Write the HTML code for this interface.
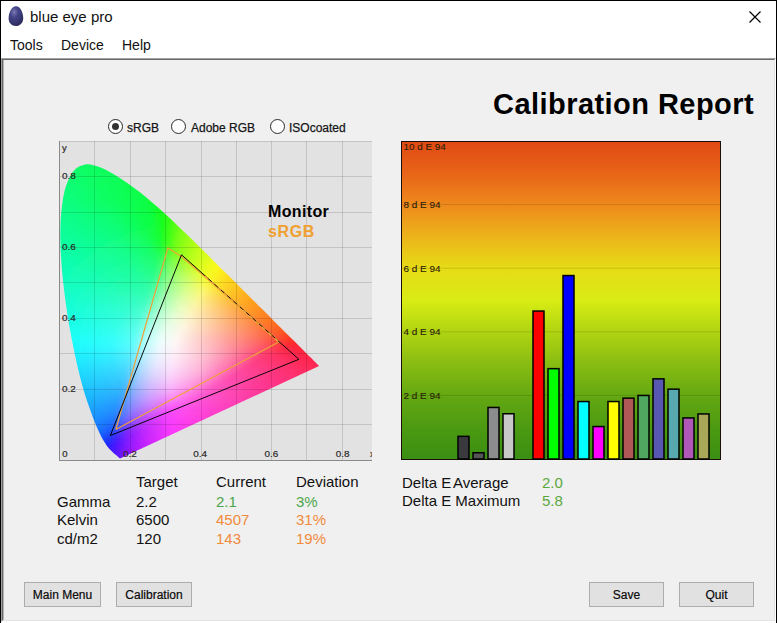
<!DOCTYPE html>
<html><head><meta charset="utf-8">
<style>
*{margin:0;padding:0;box-sizing:border-box}
html,body{width:777px;height:623px;overflow:hidden;background:#fff;font-family:"Liberation Sans",sans-serif;color:#111}
.a{position:absolute;white-space:nowrap}
#frame{position:absolute;left:0;top:0;width:777px;height:623px;border-left:1px solid #000;border-top:1px solid #000;border-right:1px solid #000}
#client{position:absolute;left:1px;top:58px;width:775px;height:564px;background:#f0f0f0;border-top:1px solid #a0a0a0;border-left:1px solid #a0a0a0;border-right:1px solid #fff;border-bottom:1px solid #fff}
#client2{position:absolute;left:2px;top:59px;width:773px;height:562px;border-top:1px solid #696969;border-left:1px solid #696969;border-right:1px solid #e3e3e3;border-bottom:1px solid #e3e3e3}
.btn{position:absolute;height:25px;background:#e1e1e1;border:1px solid #adadad;font-size:12px;-webkit-text-stroke:0.2px #222;text-align:center;line-height:24px;color:#000}
.radio{position:absolute;width:15px;height:15px;border-radius:50%;border:1.3px solid #2a2a2a;background:#fff}
</style></head><body>
<div id="frame"></div>
<!-- title -->
<svg class="a" style="left:0;top:0" width="32" height="32" viewBox="0 0 32 32"><defs><radialGradient id="egg" cx="0.38" cy="0.3" r="0.75"><stop offset="0" stop-color="#7a7ab0"/><stop offset="0.35" stop-color="#45458a"/><stop offset="0.8" stop-color="#33336a"/><stop offset="1" stop-color="#2a2a55"/></radialGradient></defs><path d="M16,6.2C20.3,6.2 23.2,12.5 23.2,18.2C23.2,22.8 20,26 15.8,26C11.6,26 8.6,22.8 8.6,18.5C8.6,12.5 11.7,6.2 16,6.2Z" fill="url(#egg)"/></svg>
<div class="a" style="left:30px;top:8px;font-size:15px;line-height:18px">blue eye pro</div>
<svg class="a" style="left:748px;top:10px" width="14" height="14" viewBox="0 0 14 14"><path d="M1.5 1.5L12.5 12.5M12.5 1.5L1.5 12.5" stroke="#000" stroke-width="1.2" fill="none"/></svg>
<!-- menu -->
<div class="a" style="left:10px;top:37px;font-size:14px;line-height:17px">Tools</div>
<div class="a" style="left:61px;top:37px;font-size:14px;line-height:17px">Device</div>
<div class="a" style="left:122px;top:37px;font-size:14px;line-height:17px">Help</div>
<div id="client"></div><div id="client2"></div><div class="a" style="left:3px;top:60px;width:1px;height:560px;background:#b4b4b4"></div>

<div class="a" style="left:493px;top:88px;font-size:29px;font-weight:bold;color:#000;line-height:32px;letter-spacing:0.45px">Calibration Report</div>

<!-- radios -->
<div class="radio" style="left:108px;top:119px"></div>
<div class="a" style="left:112px;top:123px;width:7px;height:7px;border-radius:50%;background:#333"></div>
<div class="a" style="left:127px;top:121px;font-size:12px;line-height:14px;-webkit-text-stroke:0.25px #222">sRGB</div>
<div class="radio" style="left:170.5px;top:119px"></div>
<div class="a" style="left:191px;top:121px;font-size:12px;line-height:14px;-webkit-text-stroke:0.25px #222">Adobe RGB</div>
<div class="radio" style="left:269.5px;top:119px"></div>
<div class="a" style="left:289px;top:121px;font-size:12px;line-height:14px;-webkit-text-stroke:0.25px #222">ISOcoated</div>

<!-- CIE -->
<svg class="a" style="left:0;top:0" width="777" height="623" viewBox="0 0 777 623">
<clipPath id="plotclip"><rect x="59" y="141" width="313" height="320"/></clipPath><rect x="59" y="141" width="313" height="319" fill="#e2e2e2"/>
<defs><clipPath id="loc"><path d="M120.6 458.2C120.6 458.2 120.6 458.2 120.6 458.2C120.6 458.2 120.5 458.3 120.5 458.3C120.5 458.3 120.5 458.3 120.5 458.3C120.4 458.3 120.4 458.3 120.3 458.3C120.3 458.3 120.3 458.3 120.2 458.3C120.2 458.3 120.2 458.3 120.1 458.3C120.0 458.3 120.0 458.3 119.9 458.3C119.9 458.3 119.8 458.3 119.7 458.2C119.6 458.1 119.4 458.1 119.3 457.9C119.1 457.8 119.0 457.7 118.8 457.6C118.6 457.4 118.3 457.2 118.1 457.0C117.8 456.7 117.5 456.4 117.2 456.1C116.9 455.8 116.5 455.5 116.0 455.1C115.6 454.7 115.0 454.3 114.4 453.7C113.8 453.2 113.2 452.7 112.5 452.0C111.7 451.2 110.9 450.5 110.0 449.5C109.1 448.5 108.1 447.5 107.0 445.9C105.8 444.2 104.5 442.3 102.9 439.5C101.4 436.7 99.7 433.7 97.8 429.2C95.9 424.8 93.7 419.7 91.3 413.0C88.9 406.2 86.0 398.4 83.3 388.9C80.6 379.3 77.7 367.9 75.1 355.4C72.4 342.9 69.5 328.1 67.3 313.7C65.1 299.3 63.1 283.4 61.9 269.1C60.7 254.8 60.0 240.4 60.4 227.9C60.7 215.4 61.9 203.3 63.9 194.1C66.0 184.8 69.2 177.1 72.8 172.1C76.3 167.2 80.9 165.3 85.3 164.4C89.7 163.6 94.7 165.5 99.4 167.1C104.2 168.8 109.1 171.7 113.8 174.3C118.4 176.9 122.9 179.9 127.3 182.9C131.7 186.0 136.0 189.2 140.3 192.6C144.6 196.0 148.8 199.6 153.1 203.2C157.3 206.9 161.5 210.7 165.8 214.6C170.0 218.4 174.2 222.4 178.4 226.4C182.6 230.4 186.9 234.5 191.1 238.6C195.3 242.7 199.5 246.9 203.7 251.0C207.9 255.1 212.1 259.3 216.2 263.4C220.3 267.5 224.5 271.6 228.5 275.6C232.5 279.6 236.5 283.6 240.4 287.5C244.3 291.4 248.2 295.2 251.9 298.9C255.6 302.6 259.2 306.2 262.6 309.6C266.0 313.0 269.4 316.4 272.4 319.4C275.5 322.5 278.3 325.3 281.0 327.9C283.6 330.6 286.2 333.2 288.5 335.4C290.8 337.7 292.8 339.7 294.7 341.6C296.6 343.5 298.2 345.1 299.8 346.7C301.3 348.2 302.6 349.5 303.8 350.7C305.0 351.9 306.0 352.9 307.0 353.9C308.0 354.9 308.8 355.7 309.6 356.5C310.4 357.3 311.1 358.0 311.8 358.6C312.4 359.3 313.0 359.9 313.5 360.4C314.1 360.9 314.5 361.4 314.9 361.8C315.4 362.2 315.6 362.5 316.0 362.9C316.4 363.3 317.0 363.8 317.4 364.3C317.9 364.7 318.3 365.2 318.6 365.5C318.9 365.8 319.0 365.9 319.1 366.0Z"/></clipPath><linearGradient id="r0" gradientUnits="userSpaceOnUse" x1="78" x2="95" y1="0" y2="0"><stop offset="0.000" stop-color="#08fe67"/><stop offset="0.941" stop-color="#08fe61"/><stop offset="1.000" stop-color="#08fe60"/></linearGradient><linearGradient id="r1" gradientUnits="userSpaceOnUse" x1="75" x2="104" y1="0" y2="0"><stop offset="0.000" stop-color="#08fe68"/><stop offset="0.966" stop-color="#08fe5d"/><stop offset="1.000" stop-color="#08fe5c"/></linearGradient><linearGradient id="r2" gradientUnits="userSpaceOnUse" x1="72" x2="108" y1="0" y2="0"><stop offset="0.000" stop-color="#08fe68"/><stop offset="1.000" stop-color="#08fe5b"/></linearGradient><linearGradient id="r3" gradientUnits="userSpaceOnUse" x1="69" x2="112" y1="0" y2="0"><stop offset="0.000" stop-color="#08fe6a"/><stop offset="0.977" stop-color="#08fe59"/><stop offset="1.000" stop-color="#08fe59"/></linearGradient><linearGradient id="r4" gradientUnits="userSpaceOnUse" x1="67" x2="116" y1="0" y2="0"><stop offset="0.000" stop-color="#08fe6b"/><stop offset="0.980" stop-color="#08fe58"/><stop offset="1.000" stop-color="#08fe58"/></linearGradient><linearGradient id="r5" gradientUnits="userSpaceOnUse" x1="66" x2="120" y1="0" y2="0"><stop offset="0.000" stop-color="#08fe6c"/><stop offset="1.000" stop-color="#09fe55"/></linearGradient><linearGradient id="r6" gradientUnits="userSpaceOnUse" x1="65" x2="123" y1="0" y2="0"><stop offset="0.000" stop-color="#08fe6e"/><stop offset="1.000" stop-color="#09fe54"/></linearGradient><linearGradient id="r7" gradientUnits="userSpaceOnUse" x1="64" x2="127" y1="0" y2="0"><stop offset="0.000" stop-color="#08fe70"/><stop offset="0.984" stop-color="#09fe52"/><stop offset="1.000" stop-color="#09fe51"/></linearGradient><linearGradient id="r8" gradientUnits="userSpaceOnUse" x1="63" x2="130" y1="0" y2="0"><stop offset="0.000" stop-color="#08fe72"/><stop offset="0.985" stop-color="#09fe50"/><stop offset="1.000" stop-color="#09fe4f"/></linearGradient><linearGradient id="r9" gradientUnits="userSpaceOnUse" x1="63" x2="133" y1="0" y2="0"><stop offset="0.000" stop-color="#08fe74"/><stop offset="1.000" stop-color="#09fe4e"/></linearGradient><linearGradient id="r10" gradientUnits="userSpaceOnUse" x1="62" x2="136" y1="0" y2="0"><stop offset="0.000" stop-color="#08fe76"/><stop offset="1.000" stop-color="#0afe4c"/></linearGradient><linearGradient id="r11" gradientUnits="userSpaceOnUse" x1="61" x2="138" y1="0" y2="0"><stop offset="0.000" stop-color="#08fe78"/><stop offset="0.987" stop-color="#0afe4b"/><stop offset="1.000" stop-color="#0afe4a"/></linearGradient><linearGradient id="r12" gradientUnits="userSpaceOnUse" x1="60" x2="141" y1="0" y2="0"><stop offset="0.000" stop-color="#08fe7a"/><stop offset="0.988" stop-color="#0afe48"/><stop offset="1.000" stop-color="#0afe48"/></linearGradient><linearGradient id="r13" gradientUnits="userSpaceOnUse" x1="59" x2="144" y1="0" y2="0"><stop offset="0.000" stop-color="#08fe7b"/><stop offset="0.988" stop-color="#0afe46"/><stop offset="1.000" stop-color="#0afe45"/></linearGradient><linearGradient id="r14" gradientUnits="userSpaceOnUse" x1="58" x2="146" y1="0" y2="0"><stop offset="0.000" stop-color="#08fe7d"/><stop offset="0.932" stop-color="#0afe49"/><stop offset="1.000" stop-color="#0afe43"/></linearGradient><linearGradient id="r15" gradientUnits="userSpaceOnUse" x1="58" x2="149" y1="0" y2="0"><stop offset="0.000" stop-color="#08fe7f"/><stop offset="0.923" stop-color="#0bfe47"/><stop offset="0.989" stop-color="#0bfe41"/><stop offset="1.000" stop-color="#0bfe40"/></linearGradient><linearGradient id="r16" gradientUnits="userSpaceOnUse" x1="58" x2="151" y1="0" y2="0"><stop offset="0.000" stop-color="#08fe80"/><stop offset="0.882" stop-color="#0bfe4a"/><stop offset="0.989" stop-color="#0bfe3e"/><stop offset="1.000" stop-color="#0bfe3d"/></linearGradient><linearGradient id="r17" gradientUnits="userSpaceOnUse" x1="58" x2="153" y1="0" y2="0"><stop offset="0.000" stop-color="#08fe81"/><stop offset="0.884" stop-color="#0bfe48"/><stop offset="0.989" stop-color="#0bfe3b"/><stop offset="1.000" stop-color="#0bfe3a"/></linearGradient><linearGradient id="r18" gradientUnits="userSpaceOnUse" x1="57" x2="156" y1="0" y2="0"><stop offset="0.000" stop-color="#08fe83"/><stop offset="0.869" stop-color="#0bfe47"/><stop offset="0.990" stop-color="#0cfe36"/><stop offset="1.000" stop-color="#0cfe34"/></linearGradient><linearGradient id="r19" gradientUnits="userSpaceOnUse" x1="57" x2="158" y1="0" y2="0"><stop offset="0.000" stop-color="#08fe84"/><stop offset="0.851" stop-color="#0cfe48"/><stop offset="0.990" stop-color="#0cfe31"/><stop offset="1.000" stop-color="#0cfe2f"/></linearGradient><linearGradient id="r20" gradientUnits="userSpaceOnUse" x1="57" x2="160" y1="0" y2="0"><stop offset="0.000" stop-color="#09fe85"/><stop offset="0.835" stop-color="#0cfe49"/><stop offset="0.990" stop-color="#0cfe2b"/><stop offset="1.000" stop-color="#0cfe28"/></linearGradient><linearGradient id="r21" gradientUnits="userSpaceOnUse" x1="57" x2="162" y1="0" y2="0"><stop offset="0.000" stop-color="#09fe87"/><stop offset="0.819" stop-color="#0cfe49"/><stop offset="0.990" stop-color="#0dfe24"/><stop offset="1.000" stop-color="#0efe21"/></linearGradient><linearGradient id="r22" gradientUnits="userSpaceOnUse" x1="57" x2="165" y1="0" y2="0"><stop offset="0.000" stop-color="#09fe88"/><stop offset="0.759" stop-color="#0cfe4f"/><stop offset="0.926" stop-color="#0dfe2e"/><stop offset="1.000" stop-color="#15fe17"/></linearGradient><linearGradient id="r23" gradientUnits="userSpaceOnUse" x1="56" x2="167" y1="0" y2="0"><stop offset="0.000" stop-color="#09fe8a"/><stop offset="0.559" stop-color="#0cfe60"/><stop offset="0.829" stop-color="#0dfe43"/><stop offset="0.973" stop-color="#14fe19"/><stop offset="0.991" stop-color="#1afe13"/><stop offset="1.000" stop-color="#1cfe12"/></linearGradient><linearGradient id="r24" gradientUnits="userSpaceOnUse" x1="56" x2="169" y1="0" y2="0"><stop offset="0.000" stop-color="#09fe8b"/><stop offset="0.513" stop-color="#0cfe65"/><stop offset="0.814" stop-color="#0dfe44"/><stop offset="0.938" stop-color="#12fe1e"/><stop offset="0.991" stop-color="#23fe10"/><stop offset="1.000" stop-color="#26fe0f"/></linearGradient><linearGradient id="r25" gradientUnits="userSpaceOnUse" x1="56" x2="171" y1="0" y2="0"><stop offset="0.000" stop-color="#09fe8c"/><stop offset="0.470" stop-color="#0cfe6a"/><stop offset="0.817" stop-color="#0efe41"/><stop offset="0.922" stop-color="#14fe1d"/><stop offset="0.991" stop-color="#2cfe0f"/><stop offset="1.000" stop-color="#2ffe0e"/></linearGradient><linearGradient id="r26" gradientUnits="userSpaceOnUse" x1="56" x2="173" y1="0" y2="0"><stop offset="0.000" stop-color="#09fe8e"/><stop offset="0.479" stop-color="#0cfe6a"/><stop offset="0.803" stop-color="#0efe41"/><stop offset="0.906" stop-color="#15fe1d"/><stop offset="0.991" stop-color="#35fe0e"/><stop offset="1.000" stop-color="#39fe0e"/></linearGradient><linearGradient id="r27" gradientUnits="userSpaceOnUse" x1="56" x2="175" y1="0" y2="0"><stop offset="0.000" stop-color="#09fe8f"/><stop offset="0.471" stop-color="#0cfe6d"/><stop offset="0.790" stop-color="#0efe42"/><stop offset="0.891" stop-color="#16fe1e"/><stop offset="0.975" stop-color="#39fe0f"/><stop offset="0.992" stop-color="#40fe0f"/><stop offset="1.000" stop-color="#43fe0f"/></linearGradient><linearGradient id="r28" gradientUnits="userSpaceOnUse" x1="56" x2="178" y1="0" y2="0"><stop offset="0.000" stop-color="#09fe91"/><stop offset="0.459" stop-color="#0dfe6f"/><stop offset="0.787" stop-color="#0ffe3f"/><stop offset="0.869" stop-color="#17fe1e"/><stop offset="0.951" stop-color="#3cfe0f"/><stop offset="1.000" stop-color="#54fe0f"/></linearGradient><linearGradient id="r29" gradientUnits="userSpaceOnUse" x1="55" x2="180" y1="0" y2="0"><stop offset="0.000" stop-color="#09fe92"/><stop offset="0.464" stop-color="#0dfe70"/><stop offset="0.768" stop-color="#0ffe42"/><stop offset="0.864" stop-color="#1afe1c"/><stop offset="0.944" stop-color="#43fe10"/><stop offset="0.992" stop-color="#5cfe10"/><stop offset="1.000" stop-color="#60fe10"/></linearGradient><linearGradient id="r30" gradientUnits="userSpaceOnUse" x1="55" x2="182" y1="0" y2="0"><stop offset="0.000" stop-color="#09fe94"/><stop offset="0.457" stop-color="#0dfe72"/><stop offset="0.772" stop-color="#10fe3f"/><stop offset="0.850" stop-color="#1afe1d"/><stop offset="0.929" stop-color="#46fe10"/><stop offset="0.992" stop-color="#68fe10"/><stop offset="1.000" stop-color="#6cfe10"/></linearGradient><linearGradient id="r31" gradientUnits="userSpaceOnUse" x1="55" x2="184" y1="0" y2="0"><stop offset="0.000" stop-color="#0afe95"/><stop offset="0.465" stop-color="#0efe72"/><stop offset="0.760" stop-color="#10fe3f"/><stop offset="0.837" stop-color="#1bfe1e"/><stop offset="0.915" stop-color="#49fe11"/><stop offset="0.992" stop-color="#73fe11"/><stop offset="1.000" stop-color="#76fe10"/></linearGradient><linearGradient id="r32" gradientUnits="userSpaceOnUse" x1="55" x2="186" y1="0" y2="0"><stop offset="0.000" stop-color="#0afe96"/><stop offset="0.458" stop-color="#0efe75"/><stop offset="0.748" stop-color="#11fe40"/><stop offset="0.824" stop-color="#1bfe1f"/><stop offset="0.901" stop-color="#4bfe11"/><stop offset="0.992" stop-color="#7dfe11"/><stop offset="1.000" stop-color="#80fe11"/></linearGradient><linearGradient id="r33" gradientUnits="userSpaceOnUse" x1="55" x2="188" y1="0" y2="0"><stop offset="0.000" stop-color="#0afe98"/><stop offset="0.466" stop-color="#0ffe75"/><stop offset="0.737" stop-color="#11fe42"/><stop offset="0.812" stop-color="#1cfe1f"/><stop offset="0.887" stop-color="#4efe12"/><stop offset="0.977" stop-color="#80fe11"/><stop offset="0.992" stop-color="#87fe11"/><stop offset="1.000" stop-color="#89fe11"/></linearGradient><linearGradient id="r34" gradientUnits="userSpaceOnUse" x1="55" x2="191" y1="0" y2="0"><stop offset="0.000" stop-color="#0afe99"/><stop offset="0.456" stop-color="#0ffe77"/><stop offset="0.721" stop-color="#12fe43"/><stop offset="0.794" stop-color="#1cfe21"/><stop offset="0.868" stop-color="#50fe12"/><stop offset="0.956" stop-color="#84fe12"/><stop offset="1.000" stop-color="#94fe12"/></linearGradient><linearGradient id="r35" gradientUnits="userSpaceOnUse" x1="55" x2="193" y1="0" y2="0"><stop offset="0.000" stop-color="#0afe9b"/><stop offset="0.449" stop-color="#10fe79"/><stop offset="0.696" stop-color="#12fe48"/><stop offset="0.783" stop-color="#1dfe21"/><stop offset="0.855" stop-color="#52fe13"/><stop offset="0.942" stop-color="#87fe13"/><stop offset="1.000" stop-color="#9cfe12"/></linearGradient><linearGradient id="r36" gradientUnits="userSpaceOnUse" x1="55" x2="195" y1="0" y2="0"><stop offset="0.000" stop-color="#0afe9c"/><stop offset="0.443" stop-color="#10fe7b"/><stop offset="0.671" stop-color="#13fe4e"/><stop offset="0.757" stop-color="#18fe2a"/><stop offset="0.814" stop-color="#3bfe15"/><stop offset="0.900" stop-color="#7cfe13"/><stop offset="1.000" stop-color="#a3fe13"/></linearGradient><linearGradient id="r37" gradientUnits="userSpaceOnUse" x1="55" x2="197" y1="0" y2="0"><stop offset="0.000" stop-color="#0afe9e"/><stop offset="0.437" stop-color="#11fe7d"/><stop offset="0.648" stop-color="#13fe54"/><stop offset="0.746" stop-color="#18fe2b"/><stop offset="0.803" stop-color="#3efe16"/><stop offset="0.887" stop-color="#7efe14"/><stop offset="1.000" stop-color="#abfe13"/></linearGradient><linearGradient id="r38" gradientUnits="userSpaceOnUse" x1="55" x2="199" y1="0" y2="0"><stop offset="0.000" stop-color="#0bfe9f"/><stop offset="0.444" stop-color="#11fe7e"/><stop offset="0.639" stop-color="#14fe56"/><stop offset="0.736" stop-color="#19fe2c"/><stop offset="0.792" stop-color="#40fe16"/><stop offset="0.861" stop-color="#78fe14"/><stop offset="0.986" stop-color="#adfe14"/><stop offset="1.000" stop-color="#b2fe14"/></linearGradient><linearGradient id="r39" gradientUnits="userSpaceOnUse" x1="55" x2="201" y1="0" y2="0"><stop offset="0.000" stop-color="#0bfea0"/><stop offset="0.425" stop-color="#11fe81"/><stop offset="0.616" stop-color="#14fe5e"/><stop offset="0.712" stop-color="#17fe36"/><stop offset="0.753" stop-color="#29fe1f"/><stop offset="0.836" stop-color="#72fe15"/><stop offset="0.945" stop-color="#a7fe15"/><stop offset="1.000" stop-color="#b9fe14"/></linearGradient><linearGradient id="r40" gradientUnits="userSpaceOnUse" x1="55" x2="203" y1="0" y2="0"><stop offset="0.000" stop-color="#0bfea2"/><stop offset="0.432" stop-color="#12fe82"/><stop offset="0.622" stop-color="#15fe5c"/><stop offset="0.716" stop-color="#1bfe30"/><stop offset="0.757" stop-color="#37fe1b"/><stop offset="0.824" stop-color="#75fe16"/><stop offset="0.932" stop-color="#aafe15"/><stop offset="1.000" stop-color="#c0fe14"/></linearGradient><linearGradient id="r41" gradientUnits="userSpaceOnUse" x1="55" x2="205" y1="0" y2="0"><stop offset="0.000" stop-color="#0bfea3"/><stop offset="0.427" stop-color="#13fe84"/><stop offset="0.613" stop-color="#15fe60"/><stop offset="0.693" stop-color="#18fe3b"/><stop offset="0.733" stop-color="#2dfe23"/><stop offset="0.800" stop-color="#6efe16"/><stop offset="0.907" stop-color="#a7fe16"/><stop offset="1.000" stop-color="#c7fe15"/></linearGradient><linearGradient id="r42" gradientUnits="userSpaceOnUse" x1="55" x2="207" y1="0" y2="0"><stop offset="0.000" stop-color="#0bfea5"/><stop offset="0.447" stop-color="#14fe84"/><stop offset="0.618" stop-color="#16fe5f"/><stop offset="0.697" stop-color="#1dfe36"/><stop offset="0.737" stop-color="#3cfe1f"/><stop offset="0.803" stop-color="#7afe17"/><stop offset="0.921" stop-color="#b4fe16"/><stop offset="1.000" stop-color="#cefe15"/></linearGradient><linearGradient id="r43" gradientUnits="userSpaceOnUse" x1="55" x2="209" y1="0" y2="0"><stop offset="0.000" stop-color="#0bfea6"/><stop offset="0.429" stop-color="#14fe87"/><stop offset="0.610" stop-color="#17fe63"/><stop offset="0.688" stop-color="#1ffe3a"/><stop offset="0.740" stop-color="#4efe1e"/><stop offset="0.805" stop-color="#85fe18"/><stop offset="0.948" stop-color="#c4fe16"/><stop offset="1.000" stop-color="#d4fe16"/></linearGradient><linearGradient id="r44" gradientUnits="userSpaceOnUse" x1="55" x2="211" y1="0" y2="0"><stop offset="0.000" stop-color="#0cfea8"/><stop offset="0.436" stop-color="#15fe88"/><stop offset="0.615" stop-color="#18fe62"/><stop offset="0.679" stop-color="#21fe3f"/><stop offset="0.744" stop-color="#5ffe1e"/><stop offset="0.821" stop-color="#95fe18"/><stop offset="0.974" stop-color="#d3fe17"/><stop offset="1.000" stop-color="#dbfe16"/></linearGradient><linearGradient id="r45" gradientUnits="userSpaceOnUse" x1="55" x2="213" y1="0" y2="0"><stop offset="0.000" stop-color="#0cfea9"/><stop offset="0.418" stop-color="#15fe8c"/><stop offset="0.595" stop-color="#18fe6a"/><stop offset="0.658" stop-color="#1dfe4d"/><stop offset="0.696" stop-color="#39fe34"/><stop offset="0.759" stop-color="#79fe1c"/><stop offset="0.886" stop-color="#bbfe18"/><stop offset="1.000" stop-color="#e1fe16"/></linearGradient><linearGradient id="r46" gradientUnits="userSpaceOnUse" x1="55" x2="215" y1="0" y2="0"><stop offset="0.000" stop-color="#0cfeab"/><stop offset="0.425" stop-color="#16fe8c"/><stop offset="0.600" stop-color="#19fe69"/><stop offset="0.650" stop-color="#1ffe52"/><stop offset="0.700" stop-color="#4afe34"/><stop offset="0.762" stop-color="#84fe1e"/><stop offset="0.900" stop-color="#c7fe19"/><stop offset="1.000" stop-color="#e8fe17"/></linearGradient><linearGradient id="r47" gradientUnits="userSpaceOnUse" x1="56" x2="217" y1="0" y2="0"><stop offset="0.000" stop-color="#0cfeac"/><stop offset="0.435" stop-color="#17fe8d"/><stop offset="0.596" stop-color="#1afe6a"/><stop offset="0.646" stop-color="#24fe54"/><stop offset="0.745" stop-color="#83fe23"/><stop offset="0.882" stop-color="#c7fe1a"/><stop offset="0.994" stop-color="#edfe17"/><stop offset="1.000" stop-color="#effe17"/></linearGradient><linearGradient id="r48" gradientUnits="userSpaceOnUse" x1="56" x2="219" y1="0" y2="0"><stop offset="0.000" stop-color="#0cfeae"/><stop offset="0.429" stop-color="#18fe8f"/><stop offset="0.601" stop-color="#1cfe6a"/><stop offset="0.638" stop-color="#28fe59"/><stop offset="0.724" stop-color="#7dfe2f"/><stop offset="0.798" stop-color="#a9fe1c"/><stop offset="0.982" stop-color="#f0fe18"/><stop offset="0.994" stop-color="#f3fe18"/><stop offset="1.000" stop-color="#f5fd18"/></linearGradient><linearGradient id="r49" gradientUnits="userSpaceOnUse" x1="56" x2="221" y1="0" y2="0"><stop offset="0.000" stop-color="#0dfeb0"/><stop offset="0.424" stop-color="#18fe91"/><stop offset="0.582" stop-color="#1cfe71"/><stop offset="0.630" stop-color="#2bfe5e"/><stop offset="0.715" stop-color="#81fe37"/><stop offset="0.800" stop-color="#b1fe1d"/><stop offset="0.982" stop-color="#f5fd18"/><stop offset="0.994" stop-color="#f9fc18"/><stop offset="1.000" stop-color="#fafb18"/></linearGradient><linearGradient id="r50" gradientUnits="userSpaceOnUse" x1="56" x2="223" y1="0" y2="0"><stop offset="0.000" stop-color="#0dfeb1"/><stop offset="0.431" stop-color="#19fe92"/><stop offset="0.599" stop-color="#21fe6d"/><stop offset="0.635" stop-color="#3bfe5f"/><stop offset="0.695" stop-color="#7bfe46"/><stop offset="0.790" stop-color="#b3fe20"/><stop offset="0.970" stop-color="#f8fc19"/><stop offset="0.994" stop-color="#fbf918"/><stop offset="1.000" stop-color="#fcf818"/></linearGradient><linearGradient id="r51" gradientUnits="userSpaceOnUse" x1="56" x2="225" y1="0" y2="0"><stop offset="0.000" stop-color="#0dfeb3"/><stop offset="0.426" stop-color="#1afe94"/><stop offset="0.592" stop-color="#23fe70"/><stop offset="0.627" stop-color="#3ffe64"/><stop offset="0.686" stop-color="#7ffe4f"/><stop offset="0.793" stop-color="#bcfe21"/><stop offset="0.959" stop-color="#fafb1a"/><stop offset="0.994" stop-color="#fdf419"/><stop offset="1.000" stop-color="#fef318"/></linearGradient><linearGradient id="r52" gradientUnits="userSpaceOnUse" x1="56" x2="227" y1="0" y2="0"><stop offset="0.000" stop-color="#0dfeb4"/><stop offset="0.421" stop-color="#1bfe96"/><stop offset="0.585" stop-color="#25fe74"/><stop offset="0.632" stop-color="#53fe65"/><stop offset="0.690" stop-color="#8bfe51"/><stop offset="0.795" stop-color="#c3fe23"/><stop offset="0.936" stop-color="#f9fb1b"/><stop offset="0.994" stop-color="#feee19"/><stop offset="1.000" stop-color="#feed19"/></linearGradient><linearGradient id="r53" gradientUnits="userSpaceOnUse" x1="56" x2="229" y1="0" y2="0"><stop offset="0.000" stop-color="#0dfeb6"/><stop offset="0.428" stop-color="#1cfe98"/><stop offset="0.566" stop-color="#22fe7b"/><stop offset="0.601" stop-color="#3bfe70"/><stop offset="0.659" stop-color="#7dfe61"/><stop offset="0.775" stop-color="#c0fe2c"/><stop offset="0.867" stop-color="#e8fe1d"/><stop offset="0.948" stop-color="#fdf61b"/><stop offset="0.994" stop-color="#fee819"/><stop offset="1.000" stop-color="#fee719"/></linearGradient><linearGradient id="r54" gradientUnits="userSpaceOnUse" x1="56" x2="231" y1="0" y2="0"><stop offset="0.000" stop-color="#0efeb7"/><stop offset="0.423" stop-color="#1dfe9a"/><stop offset="0.560" stop-color="#25fe7f"/><stop offset="0.594" stop-color="#40fe75"/><stop offset="0.651" stop-color="#80fe67"/><stop offset="0.766" stop-color="#c3fe33"/><stop offset="0.834" stop-color="#e1fe20"/><stop offset="0.926" stop-color="#fdf61c"/><stop offset="0.994" stop-color="#fee319"/><stop offset="1.000" stop-color="#fee119"/></linearGradient><linearGradient id="r55" gradientUnits="userSpaceOnUse" x1="56" x2="233" y1="0" y2="0"><stop offset="0.000" stop-color="#0efeb9"/><stop offset="0.418" stop-color="#1dfe9d"/><stop offset="0.554" stop-color="#27fe82"/><stop offset="0.588" stop-color="#45fe79"/><stop offset="0.644" stop-color="#84fe6c"/><stop offset="0.734" stop-color="#bbfe48"/><stop offset="0.814" stop-color="#dffe24"/><stop offset="0.904" stop-color="#fcf71d"/><stop offset="0.994" stop-color="#fedd19"/><stop offset="1.000" stop-color="#fedb19"/></linearGradient><linearGradient id="r56" gradientUnits="userSpaceOnUse" x1="56" x2="235" y1="0" y2="0"><stop offset="0.000" stop-color="#0efebb"/><stop offset="0.425" stop-color="#1ffe9e"/><stop offset="0.547" stop-color="#29fe86"/><stop offset="0.581" stop-color="#4afe7d"/><stop offset="0.637" stop-color="#88fe72"/><stop offset="0.737" stop-color="#c3fe4b"/><stop offset="0.816" stop-color="#e6fe25"/><stop offset="0.894" stop-color="#fdf51e"/><stop offset="0.994" stop-color="#fed71a"/><stop offset="1.000" stop-color="#fed619"/></linearGradient><linearGradient id="r57" gradientUnits="userSpaceOnUse" x1="56" x2="237" y1="0" y2="0"><stop offset="0.000" stop-color="#0efebc"/><stop offset="0.420" stop-color="#20fea0"/><stop offset="0.530" stop-color="#27fe8c"/><stop offset="0.564" stop-color="#41fe84"/><stop offset="0.619" stop-color="#83fe79"/><stop offset="0.729" stop-color="#c6fe54"/><stop offset="0.818" stop-color="#eefe27"/><stop offset="0.895" stop-color="#fef01e"/><stop offset="0.994" stop-color="#fed31a"/><stop offset="1.000" stop-color="#fed119"/></linearGradient><linearGradient id="r58" gradientUnits="userSpaceOnUse" x1="56" x2="239" y1="0" y2="0"><stop offset="0.000" stop-color="#0efebe"/><stop offset="0.426" stop-color="#21fea1"/><stop offset="0.525" stop-color="#2afe8f"/><stop offset="0.557" stop-color="#46fe88"/><stop offset="0.612" stop-color="#87fe7e"/><stop offset="0.721" stop-color="#c9fe5d"/><stop offset="0.831" stop-color="#f7fc25"/><stop offset="0.995" stop-color="#fecd1a"/><stop offset="1.000" stop-color="#fecc1a"/></linearGradient><linearGradient id="r59" gradientUnits="userSpaceOnUse" x1="56" x2="241" y1="0" y2="0"><stop offset="0.000" stop-color="#0ffebf"/><stop offset="0.422" stop-color="#22fea4"/><stop offset="0.519" stop-color="#2cfe93"/><stop offset="0.551" stop-color="#4cfe8c"/><stop offset="0.605" stop-color="#8bfe82"/><stop offset="0.724" stop-color="#d1fe60"/><stop offset="0.832" stop-color="#fbf927"/><stop offset="0.995" stop-color="#fec81a"/><stop offset="1.000" stop-color="#fec71a"/></linearGradient><linearGradient id="r60" gradientUnits="userSpaceOnUse" x1="57" x2="243" y1="0" y2="0"><stop offset="0.000" stop-color="#0ffec1"/><stop offset="0.419" stop-color="#24fea6"/><stop offset="0.505" stop-color="#2dfe97"/><stop offset="0.538" stop-color="#4afe90"/><stop offset="0.591" stop-color="#8afe88"/><stop offset="0.699" stop-color="#ccfe6e"/><stop offset="0.817" stop-color="#fbf82d"/><stop offset="0.935" stop-color="#fed21d"/><stop offset="1.000" stop-color="#fec21a"/></linearGradient><linearGradient id="r61" gradientUnits="userSpaceOnUse" x1="57" x2="245" y1="0" y2="0"><stop offset="0.000" stop-color="#0ffec3"/><stop offset="0.436" stop-color="#26fea6"/><stop offset="0.500" stop-color="#30fe9b"/><stop offset="0.532" stop-color="#50fe94"/><stop offset="0.585" stop-color="#8efe8d"/><stop offset="0.702" stop-color="#d4fe71"/><stop offset="0.798" stop-color="#faf93a"/><stop offset="0.862" stop-color="#fee423"/><stop offset="1.000" stop-color="#febd1a"/></linearGradient><linearGradient id="r62" gradientUnits="userSpaceOnUse" x1="57" x2="247" y1="0" y2="0"><stop offset="0.000" stop-color="#10fec5"/><stop offset="0.432" stop-color="#27fea8"/><stop offset="0.495" stop-color="#33fe9e"/><stop offset="0.579" stop-color="#93fe91"/><stop offset="0.705" stop-color="#dcfe74"/><stop offset="0.789" stop-color="#fcf744"/><stop offset="0.853" stop-color="#fee125"/><stop offset="1.000" stop-color="#feb91a"/></linearGradient><linearGradient id="r63" gradientUnits="userSpaceOnUse" x1="58" x2="249" y1="0" y2="0"><stop offset="0.000" stop-color="#10fec6"/><stop offset="0.429" stop-color="#29feaa"/><stop offset="0.482" stop-color="#33fea2"/><stop offset="0.524" stop-color="#62fe9c"/><stop offset="0.565" stop-color="#92fe96"/><stop offset="0.670" stop-color="#d3fe82"/><stop offset="0.754" stop-color="#f7fc60"/><stop offset="0.838" stop-color="#fee12a"/><stop offset="0.995" stop-color="#feb51a"/><stop offset="1.000" stop-color="#feb419"/></linearGradient><linearGradient id="r64" gradientUnits="userSpaceOnUse" x1="58" x2="251" y1="0" y2="0"><stop offset="0.000" stop-color="#10fec8"/><stop offset="0.435" stop-color="#2bfeac"/><stop offset="0.477" stop-color="#36fea6"/><stop offset="0.560" stop-color="#96fe9a"/><stop offset="0.684" stop-color="#dffe81"/><stop offset="0.756" stop-color="#fbf862"/><stop offset="0.839" stop-color="#fedb2b"/><stop offset="0.984" stop-color="#feb31a"/><stop offset="0.995" stop-color="#feb01a"/><stop offset="1.000" stop-color="#feaf19"/></linearGradient><linearGradient id="r65" gradientUnits="userSpaceOnUse" x1="58" x2="253" y1="0" y2="0"><stop offset="0.000" stop-color="#10feca"/><stop offset="0.441" stop-color="#2efeae"/><stop offset="0.472" stop-color="#3bfea9"/><stop offset="0.544" stop-color="#92fea0"/><stop offset="0.646" stop-color="#d3fe8f"/><stop offset="0.749" stop-color="#fcf769"/><stop offset="0.841" stop-color="#fed52c"/><stop offset="0.954" stop-color="#feb61c"/><stop offset="0.995" stop-color="#feac1a"/><stop offset="1.000" stop-color="#feab19"/></linearGradient><linearGradient id="r66" gradientUnits="userSpaceOnUse" x1="58" x2="255" y1="0" y2="0"><stop offset="0.000" stop-color="#11fecc"/><stop offset="0.447" stop-color="#32feaf"/><stop offset="0.477" stop-color="#4afeab"/><stop offset="0.538" stop-color="#96fea5"/><stop offset="0.650" stop-color="#dbfe92"/><stop offset="0.731" stop-color="#fcf876"/><stop offset="0.853" stop-color="#fecc29"/><stop offset="0.995" stop-color="#fea719"/><stop offset="1.000" stop-color="#fea619"/></linearGradient><linearGradient id="r67" gradientUnits="userSpaceOnUse" x1="59" x2="257" y1="0" y2="0"><stop offset="0.000" stop-color="#11fecd"/><stop offset="0.434" stop-color="#34feb3"/><stop offset="0.465" stop-color="#49feaf"/><stop offset="0.525" stop-color="#96feaa"/><stop offset="0.626" stop-color="#d7fe9b"/><stop offset="0.717" stop-color="#fcf87e"/><stop offset="0.859" stop-color="#fec528"/><stop offset="1.000" stop-color="#fea219"/></linearGradient><linearGradient id="r68" gradientUnits="userSpaceOnUse" x1="59" x2="259" y1="0" y2="0"><stop offset="0.000" stop-color="#11fecf"/><stop offset="0.420" stop-color="#34feb8"/><stop offset="0.450" stop-color="#44feb4"/><stop offset="0.520" stop-color="#9bfeae"/><stop offset="0.630" stop-color="#dffe9e"/><stop offset="0.710" stop-color="#fdf584"/><stop offset="0.860" stop-color="#fec028"/><stop offset="1.000" stop-color="#fe9e19"/></linearGradient><linearGradient id="r69" gradientUnits="userSpaceOnUse" x1="59" x2="261" y1="0" y2="0"><stop offset="0.000" stop-color="#12fed1"/><stop offset="0.406" stop-color="#34febc"/><stop offset="0.436" stop-color="#40feb9"/><stop offset="0.515" stop-color="#a0feb1"/><stop offset="0.624" stop-color="#e2fea3"/><stop offset="0.693" stop-color="#fcf78e"/><stop offset="0.812" stop-color="#feca46"/><stop offset="0.871" stop-color="#feb925"/><stop offset="1.000" stop-color="#fe9918"/></linearGradient><linearGradient id="r70" gradientUnits="userSpaceOnUse" x1="59" x2="263" y1="0" y2="0"><stop offset="0.000" stop-color="#12fed2"/><stop offset="0.382" stop-color="#34fec1"/><stop offset="0.431" stop-color="#44febc"/><stop offset="0.500" stop-color="#9bfeb7"/><stop offset="0.588" stop-color="#d6fead"/><stop offset="0.676" stop-color="#fbf897"/><stop offset="0.814" stop-color="#fec547"/><stop offset="0.873" stop-color="#feb426"/><stop offset="1.000" stop-color="#fe9418"/></linearGradient><linearGradient id="r71" gradientUnits="userSpaceOnUse" x1="60" x2="265" y1="0" y2="0"><stop offset="0.000" stop-color="#12fed4"/><stop offset="0.361" stop-color="#34fec4"/><stop offset="0.420" stop-color="#45fec0"/><stop offset="0.488" stop-color="#9cfebb"/><stop offset="0.576" stop-color="#d7feb3"/><stop offset="0.663" stop-color="#fbf79e"/><stop offset="0.810" stop-color="#fec24b"/><stop offset="0.878" stop-color="#feae25"/><stop offset="0.995" stop-color="#fe9119"/><stop offset="1.000" stop-color="#fe9018"/></linearGradient><linearGradient id="r72" gradientUnits="userSpaceOnUse" x1="60" x2="267" y1="0" y2="0"><stop offset="0.000" stop-color="#12fed5"/><stop offset="0.338" stop-color="#32fec8"/><stop offset="0.406" stop-color="#42fec4"/><stop offset="0.435" stop-color="#61fec2"/><stop offset="0.483" stop-color="#a1febf"/><stop offset="0.580" stop-color="#e0feb6"/><stop offset="0.657" stop-color="#fcf6a3"/><stop offset="0.802" stop-color="#fec053"/><stop offset="0.879" stop-color="#fea926"/><stop offset="0.995" stop-color="#fe8d19"/><stop offset="1.000" stop-color="#fe8c19"/></linearGradient><linearGradient id="r73" gradientUnits="userSpaceOnUse" x1="60" x2="269" y1="0" y2="0"><stop offset="0.000" stop-color="#13fed7"/><stop offset="0.325" stop-color="#32fecc"/><stop offset="0.402" stop-color="#46fec7"/><stop offset="0.440" stop-color="#76fec5"/><stop offset="0.478" stop-color="#a6fec4"/><stop offset="0.574" stop-color="#e3febb"/><stop offset="0.651" stop-color="#fdf4a7"/><stop offset="0.813" stop-color="#feb84e"/><stop offset="0.880" stop-color="#fea527"/><stop offset="0.995" stop-color="#fe891a"/><stop offset="1.000" stop-color="#fe8819"/></linearGradient><linearGradient id="r74" gradientUnits="userSpaceOnUse" x1="61" x2="271" y1="0" y2="0"><stop offset="0.000" stop-color="#13fed9"/><stop offset="0.314" stop-color="#33fecf"/><stop offset="0.390" stop-color="#47fecb"/><stop offset="0.429" stop-color="#76fec9"/><stop offset="0.476" stop-color="#affec7"/><stop offset="0.581" stop-color="#edfebe"/><stop offset="0.648" stop-color="#fef0a9"/><stop offset="0.819" stop-color="#feb24c"/><stop offset="0.886" stop-color="#fe9f26"/><stop offset="1.000" stop-color="#fe841a"/></linearGradient><linearGradient id="r75" gradientUnits="userSpaceOnUse" x1="61" x2="273" y1="0" y2="0"><stop offset="0.000" stop-color="#13fedb"/><stop offset="0.302" stop-color="#33fed1"/><stop offset="0.387" stop-color="#4cfece"/><stop offset="0.425" stop-color="#7cfecc"/><stop offset="0.472" stop-color="#b4fecb"/><stop offset="0.575" stop-color="#f0fec3"/><stop offset="0.642" stop-color="#feeeac"/><stop offset="0.821" stop-color="#fead4d"/><stop offset="0.887" stop-color="#fe9a27"/><stop offset="1.000" stop-color="#fe7f1a"/></linearGradient><linearGradient id="r76" gradientUnits="userSpaceOnUse" x1="61" x2="275" y1="0" y2="0"><stop offset="0.000" stop-color="#14fedd"/><stop offset="0.290" stop-color="#33fed5"/><stop offset="0.374" stop-color="#4afed2"/><stop offset="0.402" stop-color="#66fed0"/><stop offset="0.449" stop-color="#a8fed0"/><stop offset="0.523" stop-color="#dcfecd"/><stop offset="0.607" stop-color="#fdf6bd"/><stop offset="0.813" stop-color="#feab54"/><stop offset="0.888" stop-color="#fe9627"/><stop offset="1.000" stop-color="#fe7b1b"/></linearGradient><linearGradient id="r77" gradientUnits="userSpaceOnUse" x1="61" x2="277" y1="0" y2="0"><stop offset="0.000" stop-color="#14fedf"/><stop offset="0.278" stop-color="#32fed7"/><stop offset="0.370" stop-color="#4efed5"/><stop offset="0.407" stop-color="#7cfed4"/><stop offset="0.444" stop-color="#adfed4"/><stop offset="0.528" stop-color="#e4fed0"/><stop offset="0.602" stop-color="#fdf5c0"/><stop offset="0.824" stop-color="#fea44e"/><stop offset="0.898" stop-color="#fe8f26"/><stop offset="1.000" stop-color="#fe771b"/></linearGradient><linearGradient id="r78" gradientUnits="userSpaceOnUse" x1="62" x2="279" y1="0" y2="0"><stop offset="0.000" stop-color="#14fee1"/><stop offset="0.267" stop-color="#33feda"/><stop offset="0.359" stop-color="#4efed8"/><stop offset="0.396" stop-color="#7bfed7"/><stop offset="0.433" stop-color="#aefed8"/><stop offset="0.516" stop-color="#e5fed5"/><stop offset="0.590" stop-color="#fdf5c6"/><stop offset="0.820" stop-color="#fea152"/><stop offset="0.894" stop-color="#fe8c28"/><stop offset="0.995" stop-color="#fe741c"/><stop offset="1.000" stop-color="#fe721c"/></linearGradient><linearGradient id="r79" gradientUnits="userSpaceOnUse" x1="62" x2="281" y1="0" y2="0"><stop offset="0.000" stop-color="#14fee2"/><stop offset="0.256" stop-color="#32fedd"/><stop offset="0.356" stop-color="#53fedb"/><stop offset="0.393" stop-color="#82fedb"/><stop offset="0.429" stop-color="#b3fedb"/><stop offset="0.511" stop-color="#e8fed9"/><stop offset="0.584" stop-color="#fef3c9"/><stop offset="0.831" stop-color="#fe994d"/><stop offset="0.904" stop-color="#fe8526"/><stop offset="0.995" stop-color="#fe6f1c"/><stop offset="1.000" stop-color="#fe6e1c"/></linearGradient><linearGradient id="r80" gradientUnits="userSpaceOnUse" x1="62" x2="283" y1="0" y2="0"><stop offset="0.000" stop-color="#15fee4"/><stop offset="0.253" stop-color="#33fedf"/><stop offset="0.353" stop-color="#56fede"/><stop offset="0.425" stop-color="#b8fedf"/><stop offset="0.507" stop-color="#ebfedd"/><stop offset="0.579" stop-color="#fef1cc"/><stop offset="0.842" stop-color="#fe9248"/><stop offset="0.914" stop-color="#fe7e24"/><stop offset="0.995" stop-color="#fe6b1d"/><stop offset="1.000" stop-color="#fe691c"/></linearGradient><linearGradient id="r81" gradientUnits="userSpaceOnUse" x1="63" x2="285" y1="0" y2="0"><stop offset="0.000" stop-color="#15fee6"/><stop offset="0.243" stop-color="#33fee2"/><stop offset="0.342" stop-color="#57fee1"/><stop offset="0.378" stop-color="#88fee1"/><stop offset="0.414" stop-color="#b9fee2"/><stop offset="0.486" stop-color="#e8fee1"/><stop offset="0.559" stop-color="#fdf5d4"/><stop offset="0.838" stop-color="#fe8f4b"/><stop offset="0.910" stop-color="#fe7b26"/><stop offset="1.000" stop-color="#fe641d"/></linearGradient><linearGradient id="r82" gradientUnits="userSpaceOnUse" x1="63" x2="287" y1="0" y2="0"><stop offset="0.000" stop-color="#15fee9"/><stop offset="0.232" stop-color="#32fee4"/><stop offset="0.330" stop-color="#54fee4"/><stop offset="0.366" stop-color="#7ffee4"/><stop offset="0.402" stop-color="#b4fee5"/><stop offset="0.464" stop-color="#e2fee5"/><stop offset="0.545" stop-color="#fdf6da"/><stop offset="0.839" stop-color="#fe8a4c"/><stop offset="0.911" stop-color="#fe7627"/><stop offset="1.000" stop-color="#fe5f1d"/></linearGradient><linearGradient id="r83" gradientUnits="userSpaceOnUse" x1="63" x2="289" y1="0" y2="0"><stop offset="0.000" stop-color="#15feeb"/><stop offset="0.230" stop-color="#33fee7"/><stop offset="0.327" stop-color="#57fee7"/><stop offset="0.363" stop-color="#86fee7"/><stop offset="0.398" stop-color="#b9fee8"/><stop offset="0.469" stop-color="#eafee8"/><stop offset="0.540" stop-color="#fef5dc"/><stop offset="0.841" stop-color="#fe854d"/><stop offset="0.912" stop-color="#fe7127"/><stop offset="1.000" stop-color="#fe591e"/></linearGradient><linearGradient id="r84" gradientUnits="userSpaceOnUse" x1="64" x2="291" y1="0" y2="0"><stop offset="0.000" stop-color="#16feed"/><stop offset="0.220" stop-color="#33fee9"/><stop offset="0.317" stop-color="#58fee9"/><stop offset="0.352" stop-color="#84feea"/><stop offset="0.388" stop-color="#b9feeb"/><stop offset="0.449" stop-color="#e6feec"/><stop offset="0.529" stop-color="#fef5e0"/><stop offset="0.855" stop-color="#fe7c46"/><stop offset="0.916" stop-color="#fe6b27"/><stop offset="0.996" stop-color="#fe541e"/><stop offset="1.000" stop-color="#fe531e"/></linearGradient><linearGradient id="r85" gradientUnits="userSpaceOnUse" x1="64" x2="293" y1="0" y2="0"><stop offset="0.000" stop-color="#16feef"/><stop offset="0.218" stop-color="#34feec"/><stop offset="0.314" stop-color="#5bfeec"/><stop offset="0.349" stop-color="#8afeec"/><stop offset="0.384" stop-color="#befeee"/><stop offset="0.454" stop-color="#edfeee"/><stop offset="0.524" stop-color="#fef3e2"/><stop offset="0.856" stop-color="#fe7747"/><stop offset="0.926" stop-color="#fe6325"/><stop offset="0.996" stop-color="#fe4e1f"/><stop offset="1.000" stop-color="#fe4c1e"/></linearGradient><linearGradient id="r86" gradientUnits="userSpaceOnUse" x1="64" x2="295" y1="0" y2="0"><stop offset="0.000" stop-color="#16fef1"/><stop offset="0.208" stop-color="#32feee"/><stop offset="0.303" stop-color="#57feef"/><stop offset="0.329" stop-color="#73feef"/><stop offset="0.372" stop-color="#b9fef0"/><stop offset="0.433" stop-color="#e7fef1"/><stop offset="0.502" stop-color="#fdf7ea"/><stop offset="0.848" stop-color="#fe754d"/><stop offset="0.926" stop-color="#fe5d26"/><stop offset="0.996" stop-color="#fe451f"/><stop offset="1.000" stop-color="#fe431f"/></linearGradient><linearGradient id="r87" gradientUnits="userSpaceOnUse" x1="65" x2="297" y1="0" y2="0"><stop offset="0.000" stop-color="#16fef3"/><stop offset="0.207" stop-color="#34fef1"/><stop offset="0.302" stop-color="#5dfef2"/><stop offset="0.336" stop-color="#8efef2"/><stop offset="0.371" stop-color="#c2fef3"/><stop offset="0.431" stop-color="#edfef4"/><stop offset="0.509" stop-color="#fef2e7"/><stop offset="0.862" stop-color="#fe6b46"/><stop offset="0.931" stop-color="#fe5425"/><stop offset="1.000" stop-color="#fe3a1f"/></linearGradient><linearGradient id="r88" gradientUnits="userSpaceOnUse" x1="65" x2="299" y1="0" y2="0"><stop offset="0.000" stop-color="#17fef5"/><stop offset="0.197" stop-color="#32fef4"/><stop offset="0.291" stop-color="#58fef4"/><stop offset="0.316" stop-color="#76fef4"/><stop offset="0.359" stop-color="#bcfef5"/><stop offset="0.410" stop-color="#e6fef6"/><stop offset="0.479" stop-color="#fdf8f0"/><stop offset="0.658" stop-color="#feb2a5"/><stop offset="0.872" stop-color="#fe6241"/><stop offset="0.940" stop-color="#fe4925"/><stop offset="1.000" stop-color="#fe3120"/></linearGradient><linearGradient id="r89" gradientUnits="userSpaceOnUse" x1="66" x2="301" y1="0" y2="0"><stop offset="0.000" stop-color="#17fef8"/><stop offset="0.196" stop-color="#34fef6"/><stop offset="0.281" stop-color="#57fef7"/><stop offset="0.306" stop-color="#73fef7"/><stop offset="0.349" stop-color="#bbfef7"/><stop offset="0.400" stop-color="#e7fef8"/><stop offset="0.468" stop-color="#fdf8f3"/><stop offset="0.638" stop-color="#feb6ad"/><stop offset="0.877" stop-color="#fe5a3f"/><stop offset="0.936" stop-color="#fe4126"/><stop offset="0.996" stop-color="#fe2b22"/><stop offset="1.000" stop-color="#fe2922"/></linearGradient><linearGradient id="r90" gradientUnits="userSpaceOnUse" x1="66" x2="303" y1="0" y2="0"><stop offset="0.000" stop-color="#17fefa"/><stop offset="0.194" stop-color="#34fdf9"/><stop offset="0.278" stop-color="#59fdf9"/><stop offset="0.312" stop-color="#86fdf9"/><stop offset="0.346" stop-color="#bffefa"/><stop offset="0.405" stop-color="#edfefa"/><stop offset="0.473" stop-color="#fef5f1"/><stop offset="0.650" stop-color="#feada7"/><stop offset="0.878" stop-color="#fe5140"/><stop offset="0.945" stop-color="#fe3526"/><stop offset="0.996" stop-color="#fe2625"/><stop offset="1.000" stop-color="#fe2426"/></linearGradient><linearGradient id="r91" gradientUnits="userSpaceOnUse" x1="66" x2="305" y1="0" y2="0"><stop offset="0.000" stop-color="#17fdfb"/><stop offset="0.192" stop-color="#35fdfb"/><stop offset="0.276" stop-color="#5bfdfb"/><stop offset="0.301" stop-color="#7bfcfb"/><stop offset="0.343" stop-color="#c3fdfb"/><stop offset="0.402" stop-color="#effdfc"/><stop offset="0.469" stop-color="#fef4f2"/><stop offset="0.644" stop-color="#feaba9"/><stop offset="0.879" stop-color="#fe4842"/><stop offset="0.937" stop-color="#fe2f2a"/><stop offset="0.996" stop-color="#fe232a"/><stop offset="1.000" stop-color="#fe222a"/></linearGradient><linearGradient id="r92" gradientUnits="userSpaceOnUse" x1="67" x2="307" y1="0" y2="0"><stop offset="0.000" stop-color="#18fbfc"/><stop offset="0.183" stop-color="#34fcfc"/><stop offset="0.267" stop-color="#58fcfc"/><stop offset="0.292" stop-color="#78fbfc"/><stop offset="0.333" stop-color="#c0fcfc"/><stop offset="0.383" stop-color="#eafcfd"/><stop offset="0.450" stop-color="#fef6f6"/><stop offset="0.600" stop-color="#febcbc"/><stop offset="0.925" stop-color="#fe2c30"/><stop offset="1.000" stop-color="#fe2130"/></linearGradient><linearGradient id="r93" gradientUnits="userSpaceOnUse" x1="67" x2="309" y1="0" y2="0"><stop offset="0.000" stop-color="#18fafd"/><stop offset="0.182" stop-color="#34fafd"/><stop offset="0.264" stop-color="#5afafd"/><stop offset="0.289" stop-color="#7bfafd"/><stop offset="0.331" stop-color="#c3fafd"/><stop offset="0.388" stop-color="#f0fbfe"/><stop offset="0.455" stop-color="#fef2f4"/><stop offset="0.603" stop-color="#feb5ba"/><stop offset="0.909" stop-color="#fe2b39"/><stop offset="0.983" stop-color="#fe2333"/><stop offset="1.000" stop-color="#fe2235"/></linearGradient><linearGradient id="r94" gradientUnits="userSpaceOnUse" x1="68" x2="312" y1="0" y2="0"><stop offset="0.000" stop-color="#18f9fe"/><stop offset="0.180" stop-color="#36f7fe"/><stop offset="0.254" stop-color="#57f8fe"/><stop offset="0.279" stop-color="#77f8fe"/><stop offset="0.320" stop-color="#c0f9fe"/><stop offset="0.369" stop-color="#eaf9fe"/><stop offset="0.434" stop-color="#fef4f8"/><stop offset="0.574" stop-color="#febec5"/><stop offset="0.885" stop-color="#fe2c44"/><stop offset="0.959" stop-color="#fe2437"/><stop offset="1.000" stop-color="#fe223a"/></linearGradient><linearGradient id="r95" gradientUnits="userSpaceOnUse" x1="68" x2="313" y1="0" y2="0"><stop offset="0.000" stop-color="#18f7fe"/><stop offset="0.180" stop-color="#36f5fe"/><stop offset="0.253" stop-color="#58f5fe"/><stop offset="0.286" stop-color="#8af5fe"/><stop offset="0.318" stop-color="#c2f6fe"/><stop offset="0.376" stop-color="#eff8fe"/><stop offset="0.441" stop-color="#fef0f6"/><stop offset="0.571" stop-color="#febdc6"/><stop offset="0.808" stop-color="#fe4666"/><stop offset="0.882" stop-color="#fe2b4b"/><stop offset="0.963" stop-color="#fe243b"/><stop offset="0.996" stop-color="#fe233d"/><stop offset="1.000" stop-color="#fe233d"/></linearGradient><linearGradient id="r96" gradientUnits="userSpaceOnUse" x1="68" x2="315" y1="0" y2="0"><stop offset="0.000" stop-color="#18f4fe"/><stop offset="0.178" stop-color="#36f2fe"/><stop offset="0.251" stop-color="#59f3fe"/><stop offset="0.275" stop-color="#7df2fe"/><stop offset="0.316" stop-color="#c3f4fe"/><stop offset="0.372" stop-color="#eff6fe"/><stop offset="0.437" stop-color="#feeff7"/><stop offset="0.567" stop-color="#febbc7"/><stop offset="0.802" stop-color="#fe4169"/><stop offset="0.874" stop-color="#fe2b51"/><stop offset="0.964" stop-color="#fe253f"/><stop offset="0.996" stop-color="#fe2340"/><stop offset="1.000" stop-color="#fe2340"/></linearGradient><linearGradient id="r97" gradientUnits="userSpaceOnUse" x1="69" x2="317" y1="0" y2="0"><stop offset="0.000" stop-color="#18f2fe"/><stop offset="0.169" stop-color="#34effe"/><stop offset="0.242" stop-color="#55f0fe"/><stop offset="0.266" stop-color="#78f0fe"/><stop offset="0.306" stop-color="#c0f1fe"/><stop offset="0.355" stop-color="#e9f3fe"/><stop offset="0.419" stop-color="#fef0fa"/><stop offset="0.540" stop-color="#fec3d1"/><stop offset="0.774" stop-color="#fe4673"/><stop offset="0.847" stop-color="#fe2e5c"/><stop offset="0.960" stop-color="#fe2642"/><stop offset="1.000" stop-color="#fe2443"/></linearGradient><linearGradient id="r98" gradientUnits="userSpaceOnUse" x1="69" x2="319" y1="0" y2="0"><stop offset="0.000" stop-color="#18f0fe"/><stop offset="0.168" stop-color="#34edfe"/><stop offset="0.240" stop-color="#56ecfe"/><stop offset="0.272" stop-color="#8aedfe"/><stop offset="0.304" stop-color="#c1effe"/><stop offset="0.360" stop-color="#edf2fe"/><stop offset="0.432" stop-color="#feeaf6"/><stop offset="0.552" stop-color="#feb8cb"/><stop offset="0.768" stop-color="#fe4076"/><stop offset="0.848" stop-color="#fe2d5f"/><stop offset="0.960" stop-color="#fe2645"/><stop offset="1.000" stop-color="#fe2445"/></linearGradient><linearGradient id="r99" gradientUnits="userSpaceOnUse" x1="69" x2="321" y1="0" y2="0"><stop offset="0.000" stop-color="#18edfe"/><stop offset="0.167" stop-color="#34eafe"/><stop offset="0.238" stop-color="#56eafe"/><stop offset="0.270" stop-color="#8debfe"/><stop offset="0.302" stop-color="#c2edfe"/><stop offset="0.357" stop-color="#edeffe"/><stop offset="0.421" stop-color="#feeaf8"/><stop offset="0.540" stop-color="#febacf"/><stop offset="0.762" stop-color="#fe3c78"/><stop offset="0.889" stop-color="#fe2a55"/><stop offset="0.984" stop-color="#fe2547"/><stop offset="1.000" stop-color="#fe2548"/></linearGradient><linearGradient id="r100" gradientUnits="userSpaceOnUse" x1="70" x2="324" y1="0" y2="0"><stop offset="0.000" stop-color="#19ebfe"/><stop offset="0.165" stop-color="#35e8fe"/><stop offset="0.228" stop-color="#52e7fe"/><stop offset="0.252" stop-color="#77e7fe"/><stop offset="0.283" stop-color="#b3e9fe"/><stop offset="0.331" stop-color="#e1ecfe"/><stop offset="0.402" stop-color="#fdebfb"/><stop offset="0.520" stop-color="#febed4"/><stop offset="0.740" stop-color="#fe3e7f"/><stop offset="0.874" stop-color="#fe2b5b"/><stop offset="0.976" stop-color="#fe2649"/><stop offset="1.000" stop-color="#fe254a"/></linearGradient><linearGradient id="r101" gradientUnits="userSpaceOnUse" x1="70" x2="324" y1="0" y2="0"><stop offset="0.000" stop-color="#18e8fe"/><stop offset="0.165" stop-color="#34e4fe"/><stop offset="0.228" stop-color="#52e4fe"/><stop offset="0.260" stop-color="#89e5fe"/><stop offset="0.291" stop-color="#bee7fe"/><stop offset="0.346" stop-color="#ebebfe"/><stop offset="0.417" stop-color="#fee5f7"/><stop offset="0.535" stop-color="#feb2ce"/><stop offset="0.732" stop-color="#fe3e83"/><stop offset="0.906" stop-color="#fe2a56"/><stop offset="1.000" stop-color="#fe264c"/></linearGradient><linearGradient id="r102" gradientUnits="userSpaceOnUse" x1="71" x2="324" y1="0" y2="0"><stop offset="0.000" stop-color="#19e6fe"/><stop offset="0.166" stop-color="#35e1fe"/><stop offset="0.221" stop-color="#4ee1fe"/><stop offset="0.245" stop-color="#73e1fe"/><stop offset="0.277" stop-color="#afe3fe"/><stop offset="0.324" stop-color="#dee7fe"/><stop offset="0.395" stop-color="#fde6fc"/><stop offset="0.506" stop-color="#febeda"/><stop offset="0.719" stop-color="#fe3f89"/><stop offset="0.909" stop-color="#fe2b59"/><stop offset="0.996" stop-color="#fe274d"/><stop offset="1.000" stop-color="#fe274d"/></linearGradient><linearGradient id="r103" gradientUnits="userSpaceOnUse" x1="71" x2="324" y1="0" y2="0"><stop offset="0.000" stop-color="#19e3fe"/><stop offset="0.174" stop-color="#37defe"/><stop offset="0.221" stop-color="#4edefe"/><stop offset="0.253" stop-color="#85dffe"/><stop offset="0.285" stop-color="#bae1fe"/><stop offset="0.340" stop-color="#e8e5fe"/><stop offset="0.411" stop-color="#fee0f8"/><stop offset="0.530" stop-color="#feaed0"/><stop offset="0.704" stop-color="#fe428f"/><stop offset="0.885" stop-color="#fe2d62"/><stop offset="0.996" stop-color="#fe284f"/><stop offset="1.000" stop-color="#fe284f"/></linearGradient><linearGradient id="r104" gradientUnits="userSpaceOnUse" x1="72" x2="324" y1="0" y2="0"><stop offset="0.000" stop-color="#19e1fe"/><stop offset="0.175" stop-color="#37dbfe"/><stop offset="0.214" stop-color="#4adafe"/><stop offset="0.238" stop-color="#6edbfe"/><stop offset="0.270" stop-color="#abddfe"/><stop offset="0.317" stop-color="#dbe1fe"/><stop offset="0.389" stop-color="#fce1fd"/><stop offset="0.500" stop-color="#feb9db"/><stop offset="0.690" stop-color="#fe4495"/><stop offset="0.857" stop-color="#fe2f6c"/><stop offset="1.000" stop-color="#fe2951"/></linearGradient><linearGradient id="r105" gradientUnits="userSpaceOnUse" x1="72" x2="324" y1="0" y2="0"><stop offset="0.000" stop-color="#19dffe"/><stop offset="0.175" stop-color="#37d8fe"/><stop offset="0.214" stop-color="#4ad7fe"/><stop offset="0.238" stop-color="#70d7fe"/><stop offset="0.270" stop-color="#abdafe"/><stop offset="0.317" stop-color="#daddfe"/><stop offset="0.389" stop-color="#fcdefc"/><stop offset="0.500" stop-color="#feb6db"/><stop offset="0.675" stop-color="#fe479b"/><stop offset="0.833" stop-color="#fe3274"/><stop offset="1.000" stop-color="#fe2953"/></linearGradient><linearGradient id="r106" gradientUnits="userSpaceOnUse" x1="73" x2="322" y1="0" y2="0"><stop offset="0.000" stop-color="#19dcfe"/><stop offset="0.177" stop-color="#37d5fe"/><stop offset="0.217" stop-color="#4fd4fe"/><stop offset="0.273" stop-color="#b1d7fe"/><stop offset="0.329" stop-color="#e2dbfe"/><stop offset="0.402" stop-color="#fdd8fa"/><stop offset="0.514" stop-color="#feabd7"/><stop offset="0.667" stop-color="#fe4aa0"/><stop offset="0.811" stop-color="#fe347d"/><stop offset="0.996" stop-color="#fe2a56"/><stop offset="1.000" stop-color="#fe2a56"/></linearGradient><linearGradient id="r107" gradientUnits="userSpaceOnUse" x1="73" x2="318" y1="0" y2="0"><stop offset="0.000" stop-color="#19dafe"/><stop offset="0.180" stop-color="#36d2fe"/><stop offset="0.212" stop-color="#46d0fe"/><stop offset="0.237" stop-color="#6bd0fe"/><stop offset="0.269" stop-color="#a7d2fe"/><stop offset="0.327" stop-color="#dcd7fe"/><stop offset="0.400" stop-color="#fcd6fb"/><stop offset="0.506" stop-color="#feafdc"/><stop offset="0.669" stop-color="#fe49a4"/><stop offset="0.882" stop-color="#fe3072"/><stop offset="0.996" stop-color="#fe2b5b"/><stop offset="1.000" stop-color="#fe2b5a"/></linearGradient><linearGradient id="r108" gradientUnits="userSpaceOnUse" x1="74" x2="313" y1="0" y2="0"><stop offset="0.000" stop-color="#19d7fe"/><stop offset="0.184" stop-color="#36cffe"/><stop offset="0.218" stop-color="#4acdfe"/><stop offset="0.276" stop-color="#accffe"/><stop offset="0.335" stop-color="#ded3fe"/><stop offset="0.410" stop-color="#fcd1fb"/><stop offset="0.519" stop-color="#fea7da"/><stop offset="0.661" stop-color="#fe4daa"/><stop offset="0.820" stop-color="#fe3684"/><stop offset="0.996" stop-color="#fe2c62"/><stop offset="1.000" stop-color="#fe2b61"/></linearGradient><linearGradient id="r109" gradientUnits="userSpaceOnUse" x1="74" x2="309" y1="0" y2="0"><stop offset="0.000" stop-color="#19d5fe"/><stop offset="0.187" stop-color="#35cbfe"/><stop offset="0.221" stop-color="#4bc9fe"/><stop offset="0.272" stop-color="#a2cbfe"/><stop offset="0.323" stop-color="#d3cefe"/><stop offset="0.409" stop-color="#fbcefc"/><stop offset="0.511" stop-color="#feaae0"/><stop offset="0.664" stop-color="#fe4dae"/><stop offset="0.851" stop-color="#fe3482"/><stop offset="0.996" stop-color="#fe2c67"/><stop offset="1.000" stop-color="#fe2c66"/></linearGradient><linearGradient id="r110" gradientUnits="userSpaceOnUse" x1="75" x2="305" y1="0" y2="0"><stop offset="0.000" stop-color="#19d2fe"/><stop offset="0.191" stop-color="#35c8fe"/><stop offset="0.217" stop-color="#46c6fe"/><stop offset="0.278" stop-color="#a8c7fe"/><stop offset="0.339" stop-color="#dacafe"/><stop offset="0.417" stop-color="#fcc9fc"/><stop offset="0.522" stop-color="#fea2de"/><stop offset="0.661" stop-color="#fe4fb2"/><stop offset="0.852" stop-color="#fe3587"/><stop offset="1.000" stop-color="#fe2d6c"/></linearGradient><linearGradient id="r111" gradientUnits="userSpaceOnUse" x1="75" x2="300" y1="0" y2="0"><stop offset="0.000" stop-color="#19d0fe"/><stop offset="0.196" stop-color="#34c4fe"/><stop offset="0.222" stop-color="#47c2fe"/><stop offset="0.284" stop-color="#a8c3fe"/><stop offset="0.356" stop-color="#dfc6fe"/><stop offset="0.436" stop-color="#fcc2fa"/><stop offset="0.542" stop-color="#fe97db"/><stop offset="0.658" stop-color="#fe52b8"/><stop offset="0.836" stop-color="#fe378e"/><stop offset="0.996" stop-color="#fe2e72"/><stop offset="1.000" stop-color="#fe2d71"/></linearGradient><linearGradient id="r112" gradientUnits="userSpaceOnUse" x1="76" x2="296" y1="0" y2="0"><stop offset="0.000" stop-color="#19cdfe"/><stop offset="0.200" stop-color="#35c0fe"/><stop offset="0.227" stop-color="#4dbefe"/><stop offset="0.273" stop-color="#99befe"/><stop offset="0.336" stop-color="#d1c1fe"/><stop offset="0.427" stop-color="#fabffc"/><stop offset="0.527" stop-color="#fe9ce1"/><stop offset="0.655" stop-color="#fe53bc"/><stop offset="0.845" stop-color="#fe3791"/><stop offset="1.000" stop-color="#fe2e76"/></linearGradient><linearGradient id="r113" gradientUnits="userSpaceOnUse" x1="76" x2="292" y1="0" y2="0"><stop offset="0.000" stop-color="#19cbfe"/><stop offset="0.204" stop-color="#34bdfe"/><stop offset="0.231" stop-color="#4fbafe"/><stop offset="0.278" stop-color="#99bafe"/><stop offset="0.343" stop-color="#d0bcfe"/><stop offset="0.435" stop-color="#fab9fc"/><stop offset="0.528" stop-color="#fe99e4"/><stop offset="0.648" stop-color="#fe56c1"/><stop offset="0.833" stop-color="#fe3997"/><stop offset="1.000" stop-color="#fe2f7a"/></linearGradient><linearGradient id="r114" gradientUnits="userSpaceOnUse" x1="77" x2="288" y1="0" y2="0"><stop offset="0.000" stop-color="#19c8fe"/><stop offset="0.199" stop-color="#32b9fe"/><stop offset="0.227" stop-color="#4ab6fe"/><stop offset="0.284" stop-color="#9fb6fe"/><stop offset="0.360" stop-color="#d8b8fe"/><stop offset="0.455" stop-color="#fcb0fa"/><stop offset="0.550" stop-color="#fe89df"/><stop offset="0.645" stop-color="#fe57c5"/><stop offset="0.844" stop-color="#fe3999"/><stop offset="0.995" stop-color="#fe3080"/><stop offset="1.000" stop-color="#fe307f"/></linearGradient><linearGradient id="r115" gradientUnits="userSpaceOnUse" x1="77" x2="283" y1="0" y2="0"><stop offset="0.000" stop-color="#18c5fe"/><stop offset="0.204" stop-color="#31b5fe"/><stop offset="0.233" stop-color="#4cb2fe"/><stop offset="0.282" stop-color="#95b1fe"/><stop offset="0.350" stop-color="#cdb2fe"/><stop offset="0.456" stop-color="#fbabfc"/><stop offset="0.553" stop-color="#fe85e2"/><stop offset="0.650" stop-color="#fe56c8"/><stop offset="0.883" stop-color="#fe3897"/><stop offset="1.000" stop-color="#fe3184"/></linearGradient><linearGradient id="r116" gradientUnits="userSpaceOnUse" x1="78" x2="279" y1="0" y2="0"><stop offset="0.000" stop-color="#18c3fe"/><stop offset="0.199" stop-color="#2eb2fe"/><stop offset="0.229" stop-color="#46aefe"/><stop offset="0.289" stop-color="#9badfe"/><stop offset="0.368" stop-color="#d4adfe"/><stop offset="0.468" stop-color="#fca3fb"/><stop offset="0.577" stop-color="#fe73dd"/><stop offset="0.677" stop-color="#fe50c5"/><stop offset="0.995" stop-color="#fe3289"/><stop offset="1.000" stop-color="#fe3188"/></linearGradient><linearGradient id="r117" gradientUnits="userSpaceOnUse" x1="78" x2="275" y1="0" y2="0"><stop offset="0.000" stop-color="#18c0fe"/><stop offset="0.203" stop-color="#2eaefe"/><stop offset="0.234" stop-color="#48aafe"/><stop offset="0.284" stop-color="#91a8fe"/><stop offset="0.355" stop-color="#c9a8fe"/><stop offset="0.467" stop-color="#fa9efc"/><stop offset="0.650" stop-color="#fe56ce"/><stop offset="0.934" stop-color="#fe3696"/><stop offset="0.995" stop-color="#fe338d"/><stop offset="1.000" stop-color="#fe328c"/></linearGradient><linearGradient id="r118" gradientUnits="userSpaceOnUse" x1="79" x2="271" y1="0" y2="0"><stop offset="0.000" stop-color="#18bdfe"/><stop offset="0.198" stop-color="#2babfe"/><stop offset="0.229" stop-color="#43a6fe"/><stop offset="0.292" stop-color="#97a4fe"/><stop offset="0.375" stop-color="#d1a2fe"/><stop offset="0.490" stop-color="#fc91fa"/><stop offset="0.635" stop-color="#fe58d5"/><stop offset="0.948" stop-color="#fe3698"/><stop offset="1.000" stop-color="#fe3390"/></linearGradient><linearGradient id="r119" gradientUnits="userSpaceOnUse" x1="79" x2="266" y1="0" y2="0"><stop offset="0.000" stop-color="#18bbfe"/><stop offset="0.203" stop-color="#2ba7fe"/><stop offset="0.235" stop-color="#45a2fe"/><stop offset="0.299" stop-color="#989ffe"/><stop offset="0.385" stop-color="#d19cfe"/><stop offset="0.503" stop-color="#fc87fa"/><stop offset="0.631" stop-color="#fe59da"/><stop offset="0.963" stop-color="#fe369b"/><stop offset="0.995" stop-color="#fe3596"/><stop offset="1.000" stop-color="#fe3495"/></linearGradient><linearGradient id="r120" gradientUnits="userSpaceOnUse" x1="80" x2="262" y1="0" y2="0"><stop offset="0.000" stop-color="#18b7fe"/><stop offset="0.198" stop-color="#29a3fe"/><stop offset="0.231" stop-color="#409efe"/><stop offset="0.297" stop-color="#939afe"/><stop offset="0.385" stop-color="#ce96fe"/><stop offset="0.505" stop-color="#fb7ffb"/><stop offset="0.626" stop-color="#fe58de"/><stop offset="1.000" stop-color="#fe359a"/></linearGradient><linearGradient id="r121" gradientUnits="userSpaceOnUse" x1="81" x2="258" y1="0" y2="0"><stop offset="0.000" stop-color="#18b4fe"/><stop offset="0.203" stop-color="#2a9efe"/><stop offset="0.237" stop-color="#4999fe"/><stop offset="0.294" stop-color="#8e95fe"/><stop offset="0.373" stop-color="#c591fe"/><stop offset="0.497" stop-color="#f779fd"/><stop offset="0.633" stop-color="#fe55df"/><stop offset="0.994" stop-color="#fe369e"/><stop offset="1.000" stop-color="#fe369d"/></linearGradient><linearGradient id="r122" gradientUnits="userSpaceOnUse" x1="81" x2="253" y1="0" y2="0"><stop offset="0.000" stop-color="#17b1fe"/><stop offset="0.209" stop-color="#2b9afe"/><stop offset="0.256" stop-color="#5a93fe"/><stop offset="0.314" stop-color="#998ffe"/><stop offset="0.419" stop-color="#d586fe"/><stop offset="0.535" stop-color="#fc66fa"/><stop offset="0.709" stop-color="#fe4dd3"/><stop offset="1.000" stop-color="#fe37a3"/></linearGradient><linearGradient id="r123" gradientUnits="userSpaceOnUse" x1="82" x2="249" y1="0" y2="0"><stop offset="0.000" stop-color="#17aefe"/><stop offset="0.204" stop-color="#2896fe"/><stop offset="0.240" stop-color="#4690fe"/><stop offset="0.311" stop-color="#958afe"/><stop offset="0.419" stop-color="#d27efe"/><stop offset="0.539" stop-color="#fb5efb"/><stop offset="0.934" stop-color="#fe3cb0"/><stop offset="0.994" stop-color="#fe38a7"/><stop offset="1.000" stop-color="#fe38a6"/></linearGradient><linearGradient id="r124" gradientUnits="userSpaceOnUse" x1="83" x2="245" y1="0" y2="0"><stop offset="0.000" stop-color="#17abfe"/><stop offset="0.198" stop-color="#2693fe"/><stop offset="0.235" stop-color="#428cfe"/><stop offset="0.309" stop-color="#9085fe"/><stop offset="0.407" stop-color="#ca78fe"/><stop offset="0.556" stop-color="#fc54fa"/><stop offset="0.938" stop-color="#fe3cb3"/><stop offset="1.000" stop-color="#fe39ab"/></linearGradient><linearGradient id="r125" gradientUnits="userSpaceOnUse" x1="83" x2="241" y1="0" y2="0"><stop offset="0.000" stop-color="#17a8fe"/><stop offset="0.203" stop-color="#268efe"/><stop offset="0.241" stop-color="#4387fe"/><stop offset="0.316" stop-color="#917efe"/><stop offset="0.418" stop-color="#ca6ffe"/><stop offset="0.570" stop-color="#fc4ffa"/><stop offset="0.962" stop-color="#fe3bb4"/><stop offset="1.000" stop-color="#fe39ae"/></linearGradient><linearGradient id="r126" gradientUnits="userSpaceOnUse" x1="84" x2="236" y1="0" y2="0"><stop offset="0.000" stop-color="#17a5fe"/><stop offset="0.197" stop-color="#248bfe"/><stop offset="0.237" stop-color="#3f83fe"/><stop offset="0.316" stop-color="#8c79fe"/><stop offset="0.421" stop-color="#c767fe"/><stop offset="0.553" stop-color="#f54bfd"/><stop offset="0.697" stop-color="#fe4be4"/><stop offset="1.000" stop-color="#fe3ab4"/></linearGradient><linearGradient id="r127" gradientUnits="userSpaceOnUse" x1="85" x2="232" y1="0" y2="0"><stop offset="0.000" stop-color="#17a1fe"/><stop offset="0.190" stop-color="#2287fe"/><stop offset="0.231" stop-color="#3a7ffe"/><stop offset="0.313" stop-color="#8873fe"/><stop offset="0.422" stop-color="#c55efe"/><stop offset="0.544" stop-color="#ef46fe"/><stop offset="0.653" stop-color="#fe4af0"/><stop offset="0.993" stop-color="#fe3bb8"/><stop offset="1.000" stop-color="#fe3bb8"/></linearGradient><linearGradient id="r128" gradientUnits="userSpaceOnUse" x1="85" x2="228" y1="0" y2="0"><stop offset="0.000" stop-color="#169efe"/><stop offset="0.196" stop-color="#2282fe"/><stop offset="0.238" stop-color="#3c7afe"/><stop offset="0.322" stop-color="#896cfe"/><stop offset="0.434" stop-color="#c553fe"/><stop offset="0.545" stop-color="#eb42fe"/><stop offset="0.657" stop-color="#fe47f3"/><stop offset="0.993" stop-color="#fe3cbc"/><stop offset="1.000" stop-color="#fe3cbc"/></linearGradient><linearGradient id="r129" gradientUnits="userSpaceOnUse" x1="86" x2="223" y1="0" y2="0"><stop offset="0.000" stop-color="#169afe"/><stop offset="0.190" stop-color="#207ffe"/><stop offset="0.234" stop-color="#3875fe"/><stop offset="0.336" stop-color="#8e63fe"/><stop offset="0.453" stop-color="#c747fe"/><stop offset="0.569" stop-color="#ed3ffe"/><stop offset="0.686" stop-color="#fe46f2"/><stop offset="0.993" stop-color="#fe3dc2"/><stop offset="1.000" stop-color="#fe3cc1"/></linearGradient><linearGradient id="r130" gradientUnits="userSpaceOnUse" x1="87" x2="219" y1="0" y2="0"><stop offset="0.000" stop-color="#1696fe"/><stop offset="0.197" stop-color="#2377fe"/><stop offset="0.258" stop-color="#4e6afe"/><stop offset="0.348" stop-color="#9457fe"/><stop offset="0.485" stop-color="#d03bfe"/><stop offset="0.652" stop-color="#fb41fb"/><stop offset="1.000" stop-color="#fe3dc5"/></linearGradient><linearGradient id="r131" gradientUnits="userSpaceOnUse" x1="87" x2="215" y1="0" y2="0"><stop offset="0.000" stop-color="#1693fe"/><stop offset="0.188" stop-color="#1f75fe"/><stop offset="0.234" stop-color="#366afe"/><stop offset="0.344" stop-color="#8b50fe"/><stop offset="0.469" stop-color="#c637fe"/><stop offset="0.656" stop-color="#f93efc"/><stop offset="0.938" stop-color="#fe3fd1"/><stop offset="1.000" stop-color="#fe3dc9"/></linearGradient><linearGradient id="r132" gradientUnits="userSpaceOnUse" x1="88" x2="211" y1="0" y2="0"><stop offset="0.000" stop-color="#158efe"/><stop offset="0.195" stop-color="#216dfe"/><stop offset="0.260" stop-color="#4b5dfe"/><stop offset="0.374" stop-color="#9940fe"/><stop offset="0.504" stop-color="#ce32fe"/><stop offset="0.699" stop-color="#fb3efa"/><stop offset="0.992" stop-color="#fe3dce"/><stop offset="1.000" stop-color="#fe3dce"/></linearGradient><linearGradient id="r133" gradientUnits="userSpaceOnUse" x1="89" x2="206" y1="0" y2="0"><stop offset="0.000" stop-color="#158afe"/><stop offset="0.188" stop-color="#1f68fe"/><stop offset="0.256" stop-color="#4656fe"/><stop offset="0.376" stop-color="#9638fe"/><stop offset="0.513" stop-color="#cb2ffe"/><stop offset="0.718" stop-color="#fb3dfb"/><stop offset="0.991" stop-color="#fe3dd4"/><stop offset="1.000" stop-color="#fe3dd3"/></linearGradient><linearGradient id="r134" gradientUnits="userSpaceOnUse" x1="90" x2="202" y1="0" y2="0"><stop offset="0.000" stop-color="#1585fe"/><stop offset="0.179" stop-color="#1d63fe"/><stop offset="0.232" stop-color="#3654fe"/><stop offset="0.375" stop-color="#9230fe"/><stop offset="0.518" stop-color="#c92dfe"/><stop offset="0.732" stop-color="#fa3bfc"/><stop offset="1.000" stop-color="#fe3dd7"/></linearGradient><linearGradient id="r135" gradientUnits="userSpaceOnUse" x1="90" x2="198" y1="0" y2="0"><stop offset="0.000" stop-color="#1581fe"/><stop offset="0.167" stop-color="#1b62fe"/><stop offset="0.222" stop-color="#2d50fe"/><stop offset="0.389" stop-color="#9329fe"/><stop offset="0.537" stop-color="#ca2bfe"/><stop offset="0.778" stop-color="#fb3bfb"/><stop offset="1.000" stop-color="#fe3ddc"/></linearGradient><linearGradient id="r136" gradientUnits="userSpaceOnUse" x1="91" x2="193" y1="0" y2="0"><stop offset="0.000" stop-color="#147cfe"/><stop offset="0.176" stop-color="#1c56fe"/><stop offset="0.235" stop-color="#3443fe"/><stop offset="0.373" stop-color="#8625fe"/><stop offset="0.510" stop-color="#bd27fe"/><stop offset="0.784" stop-color="#f838fd"/><stop offset="1.000" stop-color="#fe3ce2"/></linearGradient><linearGradient id="r137" gradientUnits="userSpaceOnUse" x1="92" x2="189" y1="0" y2="0"><stop offset="0.000" stop-color="#1476fe"/><stop offset="0.165" stop-color="#1b51fe"/><stop offset="0.227" stop-color="#303cfe"/><stop offset="0.371" stop-color="#8320fe"/><stop offset="0.515" stop-color="#bb25fe"/><stop offset="0.825" stop-color="#fa37fc"/><stop offset="0.990" stop-color="#fe3ce9"/><stop offset="1.000" stop-color="#fe3ce8"/></linearGradient><linearGradient id="r138" gradientUnits="userSpaceOnUse" x1="93" x2="185" y1="0" y2="0"><stop offset="0.000" stop-color="#1470fe"/><stop offset="0.174" stop-color="#1d44fe"/><stop offset="0.261" stop-color="#462afe"/><stop offset="0.413" stop-color="#921efe"/><stop offset="0.587" stop-color="#c928fe"/><stop offset="0.870" stop-color="#fb37fb"/><stop offset="1.000" stop-color="#fe3bed"/></linearGradient><linearGradient id="r139" gradientUnits="userSpaceOnUse" x1="94" x2="181" y1="0" y2="0"><stop offset="0.000" stop-color="#1469fe"/><stop offset="0.161" stop-color="#1b3ffe"/><stop offset="0.253" stop-color="#4324fe"/><stop offset="0.437" stop-color="#981dfe"/><stop offset="0.621" stop-color="#cb27fe"/><stop offset="0.920" stop-color="#fb36fb"/><stop offset="0.989" stop-color="#fe39f4"/><stop offset="1.000" stop-color="#fe3af3"/></linearGradient><linearGradient id="r140" gradientUnits="userSpaceOnUse" x1="95" x2="176" y1="0" y2="0"><stop offset="0.000" stop-color="#1361fe"/><stop offset="0.148" stop-color="#1b39fe"/><stop offset="0.247" stop-color="#3f20fe"/><stop offset="0.444" stop-color="#941bfe"/><stop offset="0.642" stop-color="#c926fe"/><stop offset="0.963" stop-color="#fb35fc"/><stop offset="0.988" stop-color="#fc36fb"/><stop offset="1.000" stop-color="#fd37f9"/></linearGradient><linearGradient id="r141" gradientUnits="userSpaceOnUse" x1="96" x2="172" y1="0" y2="0"><stop offset="0.000" stop-color="#1358fe"/><stop offset="0.158" stop-color="#1f2dfe"/><stop offset="0.289" stop-color="#5519fe"/><stop offset="0.526" stop-color="#aa1efe"/><stop offset="0.868" stop-color="#e92efe"/><stop offset="1.000" stop-color="#f934fc"/></linearGradient><linearGradient id="r142" gradientUnits="userSpaceOnUse" x1="97" x2="168" y1="0" y2="0"><stop offset="0.000" stop-color="#134efe"/><stop offset="0.141" stop-color="#1d2afe"/><stop offset="0.282" stop-color="#5317fe"/><stop offset="0.563" stop-color="#ae1efe"/><stop offset="0.986" stop-color="#f230fe"/><stop offset="1.000" stop-color="#f431fe"/></linearGradient><linearGradient id="r143" gradientUnits="userSpaceOnUse" x1="98" x2="164" y1="0" y2="0"><stop offset="0.000" stop-color="#1346fe"/><stop offset="0.121" stop-color="#1c28fe"/><stop offset="0.242" stop-color="#4317fe"/><stop offset="0.515" stop-color="#9c1afe"/><stop offset="0.788" stop-color="#d125fe"/><stop offset="1.000" stop-color="#ed2efe"/></linearGradient><linearGradient id="r144" gradientUnits="userSpaceOnUse" x1="99" x2="159" y1="0" y2="0"><stop offset="0.000" stop-color="#123cfe"/><stop offset="0.133" stop-color="#211ffe"/><stop offset="0.333" stop-color="#6216fe"/><stop offset="0.667" stop-color="#b61efe"/><stop offset="1.000" stop-color="#e42afe"/></linearGradient><linearGradient id="r145" gradientUnits="userSpaceOnUse" x1="100" x2="155" y1="0" y2="0"><stop offset="0.000" stop-color="#1333fe"/><stop offset="0.145" stop-color="#2819fe"/><stop offset="0.509" stop-color="#8d16fe"/><stop offset="0.800" stop-color="#c420fe"/><stop offset="0.982" stop-color="#da26fe"/><stop offset="1.000" stop-color="#dc27fe"/></linearGradient><linearGradient id="r146" gradientUnits="userSpaceOnUse" x1="102" x2="151" y1="0" y2="0"><stop offset="0.000" stop-color="#1627fe"/><stop offset="0.163" stop-color="#3315fe"/><stop offset="0.531" stop-color="#8d16fe"/><stop offset="0.857" stop-color="#c520fe"/><stop offset="0.980" stop-color="#d223fe"/><stop offset="1.000" stop-color="#d424fe"/></linearGradient><linearGradient id="r147" gradientUnits="userSpaceOnUse" x1="103" x2="146" y1="0" y2="0"><stop offset="0.000" stop-color="#1921fe"/><stop offset="0.186" stop-color="#3a13fe"/><stop offset="0.605" stop-color="#9215fe"/><stop offset="0.977" stop-color="#c71ffe"/><stop offset="1.000" stop-color="#c920fe"/></linearGradient><linearGradient id="r148" gradientUnits="userSpaceOnUse" x1="106" x2="142" y1="0" y2="0"><stop offset="0.000" stop-color="#2217fe"/><stop offset="0.667" stop-color="#9615fe"/><stop offset="1.000" stop-color="#c01dfe"/></linearGradient><linearGradient id="r149" gradientUnits="userSpaceOnUse" x1="108" x2="138" y1="0" y2="0"><stop offset="0.000" stop-color="#2c13fe"/><stop offset="0.667" stop-color="#8d14fe"/><stop offset="1.000" stop-color="#b41afe"/></linearGradient><linearGradient id="r150" gradientUnits="userSpaceOnUse" x1="110" x2="134" y1="0" y2="0"><stop offset="0.000" stop-color="#3612fe"/><stop offset="0.750" stop-color="#8d13fe"/><stop offset="1.000" stop-color="#a617fe"/></linearGradient><linearGradient id="r151" gradientUnits="userSpaceOnUse" x1="112" x2="129" y1="0" y2="0"><stop offset="0.000" stop-color="#4111fe"/><stop offset="0.941" stop-color="#8d13fe"/><stop offset="1.000" stop-color="#9213fe"/></linearGradient><filter id="vb" x="-5%" y="-5%" width="110%" height="110%"><feGaussianBlur stdDeviation="1.2"/></filter></defs><g clip-path="url(#loc)"><g filter="url(#vb)"><rect x="78" y="159" width="18" height="2" fill="url(#r0)"/><rect x="75" y="161" width="30" height="2" fill="url(#r1)"/><rect x="72" y="163" width="37" height="2" fill="url(#r2)"/><rect x="69" y="165" width="44" height="2" fill="url(#r3)"/><rect x="67" y="167" width="50" height="2" fill="url(#r4)"/><rect x="66" y="169" width="55" height="2" fill="url(#r5)"/><rect x="65" y="171" width="59" height="2" fill="url(#r6)"/><rect x="64" y="173" width="64" height="2" fill="url(#r7)"/><rect x="63" y="175" width="68" height="2" fill="url(#r8)"/><rect x="63" y="177" width="71" height="2" fill="url(#r9)"/><rect x="62" y="179" width="75" height="2" fill="url(#r10)"/><rect x="61" y="181" width="78" height="2" fill="url(#r11)"/><rect x="60" y="183" width="82" height="2" fill="url(#r12)"/><rect x="59" y="185" width="86" height="2" fill="url(#r13)"/><rect x="58" y="187" width="89" height="2" fill="url(#r14)"/><rect x="58" y="189" width="92" height="2" fill="url(#r15)"/><rect x="58" y="191" width="94" height="2" fill="url(#r16)"/><rect x="58" y="193" width="96" height="2" fill="url(#r17)"/><rect x="57" y="195" width="100" height="2" fill="url(#r18)"/><rect x="57" y="197" width="102" height="2" fill="url(#r19)"/><rect x="57" y="199" width="104" height="2" fill="url(#r20)"/><rect x="57" y="201" width="106" height="2" fill="url(#r21)"/><rect x="57" y="203" width="109" height="2" fill="url(#r22)"/><rect x="56" y="205" width="112" height="2" fill="url(#r23)"/><rect x="56" y="207" width="114" height="2" fill="url(#r24)"/><rect x="56" y="209" width="116" height="2" fill="url(#r25)"/><rect x="56" y="211" width="118" height="2" fill="url(#r26)"/><rect x="56" y="213" width="120" height="2" fill="url(#r27)"/><rect x="56" y="215" width="123" height="2" fill="url(#r28)"/><rect x="55" y="217" width="126" height="2" fill="url(#r29)"/><rect x="55" y="219" width="128" height="2" fill="url(#r30)"/><rect x="55" y="221" width="130" height="2" fill="url(#r31)"/><rect x="55" y="223" width="132" height="2" fill="url(#r32)"/><rect x="55" y="225" width="134" height="2" fill="url(#r33)"/><rect x="55" y="227" width="137" height="2" fill="url(#r34)"/><rect x="55" y="229" width="139" height="2" fill="url(#r35)"/><rect x="55" y="231" width="141" height="2" fill="url(#r36)"/><rect x="55" y="233" width="143" height="2" fill="url(#r37)"/><rect x="55" y="235" width="145" height="2" fill="url(#r38)"/><rect x="55" y="237" width="147" height="2" fill="url(#r39)"/><rect x="55" y="239" width="149" height="2" fill="url(#r40)"/><rect x="55" y="241" width="151" height="2" fill="url(#r41)"/><rect x="55" y="243" width="153" height="2" fill="url(#r42)"/><rect x="55" y="245" width="155" height="2" fill="url(#r43)"/><rect x="55" y="247" width="157" height="2" fill="url(#r44)"/><rect x="55" y="249" width="159" height="2" fill="url(#r45)"/><rect x="55" y="251" width="161" height="2" fill="url(#r46)"/><rect x="56" y="253" width="162" height="2" fill="url(#r47)"/><rect x="56" y="255" width="164" height="2" fill="url(#r48)"/><rect x="56" y="257" width="166" height="2" fill="url(#r49)"/><rect x="56" y="259" width="168" height="2" fill="url(#r50)"/><rect x="56" y="261" width="170" height="2" fill="url(#r51)"/><rect x="56" y="263" width="172" height="2" fill="url(#r52)"/><rect x="56" y="265" width="174" height="2" fill="url(#r53)"/><rect x="56" y="267" width="176" height="2" fill="url(#r54)"/><rect x="56" y="269" width="178" height="2" fill="url(#r55)"/><rect x="56" y="271" width="180" height="2" fill="url(#r56)"/><rect x="56" y="273" width="182" height="2" fill="url(#r57)"/><rect x="56" y="275" width="184" height="2" fill="url(#r58)"/><rect x="56" y="277" width="186" height="2" fill="url(#r59)"/><rect x="57" y="279" width="187" height="2" fill="url(#r60)"/><rect x="57" y="281" width="189" height="2" fill="url(#r61)"/><rect x="57" y="283" width="191" height="2" fill="url(#r62)"/><rect x="58" y="285" width="192" height="2" fill="url(#r63)"/><rect x="58" y="287" width="194" height="2" fill="url(#r64)"/><rect x="58" y="289" width="196" height="2" fill="url(#r65)"/><rect x="58" y="291" width="198" height="2" fill="url(#r66)"/><rect x="59" y="293" width="199" height="2" fill="url(#r67)"/><rect x="59" y="295" width="201" height="2" fill="url(#r68)"/><rect x="59" y="297" width="203" height="2" fill="url(#r69)"/><rect x="59" y="299" width="205" height="2" fill="url(#r70)"/><rect x="60" y="301" width="206" height="2" fill="url(#r71)"/><rect x="60" y="303" width="208" height="2" fill="url(#r72)"/><rect x="60" y="305" width="210" height="2" fill="url(#r73)"/><rect x="61" y="307" width="211" height="2" fill="url(#r74)"/><rect x="61" y="309" width="213" height="2" fill="url(#r75)"/><rect x="61" y="311" width="215" height="2" fill="url(#r76)"/><rect x="61" y="313" width="217" height="2" fill="url(#r77)"/><rect x="62" y="315" width="218" height="2" fill="url(#r78)"/><rect x="62" y="317" width="220" height="2" fill="url(#r79)"/><rect x="62" y="319" width="222" height="2" fill="url(#r80)"/><rect x="63" y="321" width="223" height="2" fill="url(#r81)"/><rect x="63" y="323" width="225" height="2" fill="url(#r82)"/><rect x="63" y="325" width="227" height="2" fill="url(#r83)"/><rect x="64" y="327" width="228" height="2" fill="url(#r84)"/><rect x="64" y="329" width="230" height="2" fill="url(#r85)"/><rect x="64" y="331" width="232" height="2" fill="url(#r86)"/><rect x="65" y="333" width="233" height="2" fill="url(#r87)"/><rect x="65" y="335" width="235" height="2" fill="url(#r88)"/><rect x="66" y="337" width="236" height="2" fill="url(#r89)"/><rect x="66" y="339" width="238" height="2" fill="url(#r90)"/><rect x="66" y="341" width="240" height="2" fill="url(#r91)"/><rect x="67" y="343" width="241" height="2" fill="url(#r92)"/><rect x="67" y="345" width="243" height="2" fill="url(#r93)"/><rect x="68" y="347" width="245" height="2" fill="url(#r94)"/><rect x="68" y="349" width="246" height="2" fill="url(#r95)"/><rect x="68" y="351" width="248" height="2" fill="url(#r96)"/><rect x="69" y="353" width="249" height="2" fill="url(#r97)"/><rect x="69" y="355" width="251" height="2" fill="url(#r98)"/><rect x="69" y="357" width="253" height="2" fill="url(#r99)"/><rect x="70" y="359" width="255" height="2" fill="url(#r100)"/><rect x="70" y="361" width="255" height="2" fill="url(#r101)"/><rect x="71" y="363" width="254" height="2" fill="url(#r102)"/><rect x="71" y="365" width="254" height="2" fill="url(#r103)"/><rect x="72" y="367" width="253" height="2" fill="url(#r104)"/><rect x="72" y="369" width="253" height="2" fill="url(#r105)"/><rect x="73" y="371" width="250" height="2" fill="url(#r106)"/><rect x="73" y="373" width="246" height="2" fill="url(#r107)"/><rect x="74" y="375" width="240" height="2" fill="url(#r108)"/><rect x="74" y="377" width="236" height="2" fill="url(#r109)"/><rect x="75" y="379" width="231" height="2" fill="url(#r110)"/><rect x="75" y="381" width="226" height="2" fill="url(#r111)"/><rect x="76" y="383" width="221" height="2" fill="url(#r112)"/><rect x="76" y="385" width="217" height="2" fill="url(#r113)"/><rect x="77" y="387" width="212" height="2" fill="url(#r114)"/><rect x="77" y="389" width="207" height="2" fill="url(#r115)"/><rect x="78" y="391" width="202" height="2" fill="url(#r116)"/><rect x="78" y="393" width="198" height="2" fill="url(#r117)"/><rect x="79" y="395" width="193" height="2" fill="url(#r118)"/><rect x="79" y="397" width="188" height="2" fill="url(#r119)"/><rect x="80" y="399" width="183" height="2" fill="url(#r120)"/><rect x="81" y="401" width="178" height="2" fill="url(#r121)"/><rect x="81" y="403" width="173" height="2" fill="url(#r122)"/><rect x="82" y="405" width="168" height="2" fill="url(#r123)"/><rect x="83" y="407" width="163" height="2" fill="url(#r124)"/><rect x="83" y="409" width="159" height="2" fill="url(#r125)"/><rect x="84" y="411" width="153" height="2" fill="url(#r126)"/><rect x="85" y="413" width="148" height="2" fill="url(#r127)"/><rect x="85" y="415" width="144" height="2" fill="url(#r128)"/><rect x="86" y="417" width="138" height="2" fill="url(#r129)"/><rect x="87" y="419" width="133" height="2" fill="url(#r130)"/><rect x="87" y="421" width="129" height="2" fill="url(#r131)"/><rect x="88" y="423" width="124" height="2" fill="url(#r132)"/><rect x="89" y="425" width="118" height="2" fill="url(#r133)"/><rect x="90" y="427" width="113" height="2" fill="url(#r134)"/><rect x="90" y="429" width="109" height="2" fill="url(#r135)"/><rect x="91" y="431" width="103" height="2" fill="url(#r136)"/><rect x="92" y="433" width="98" height="2" fill="url(#r137)"/><rect x="93" y="435" width="93" height="2" fill="url(#r138)"/><rect x="94" y="437" width="88" height="2" fill="url(#r139)"/><rect x="95" y="439" width="82" height="2" fill="url(#r140)"/><rect x="96" y="441" width="77" height="2" fill="url(#r141)"/><rect x="97" y="443" width="72" height="2" fill="url(#r142)"/><rect x="98" y="445" width="67" height="2" fill="url(#r143)"/><rect x="99" y="447" width="61" height="2" fill="url(#r144)"/><rect x="100" y="449" width="56" height="2" fill="url(#r145)"/><rect x="102" y="451" width="50" height="2" fill="url(#r146)"/><rect x="103" y="453" width="44" height="2" fill="url(#r147)"/><rect x="106" y="455" width="37" height="2" fill="url(#r148)"/><rect x="108" y="457" width="31" height="2" fill="url(#r149)"/><rect x="110" y="459" width="25" height="2" fill="url(#r150)"/><rect x="112" y="461" width="18" height="2" fill="url(#r151)"/></g></g>
<line x1="94.5" y1="141" x2="94.5" y2="460" stroke="#000" stroke-opacity="0.13" stroke-width="1"/><line x1="130.5" y1="141" x2="130.5" y2="460" stroke="#000" stroke-opacity="0.13" stroke-width="1"/><line x1="165.5" y1="141" x2="165.5" y2="460" stroke="#000" stroke-opacity="0.13" stroke-width="1"/><line x1="201.5" y1="141" x2="201.5" y2="460" stroke="#000" stroke-opacity="0.13" stroke-width="1"/><line x1="236.5" y1="141" x2="236.5" y2="460" stroke="#000" stroke-opacity="0.13" stroke-width="1"/><line x1="271.5" y1="141" x2="271.5" y2="460" stroke="#000" stroke-opacity="0.13" stroke-width="1"/><line x1="306.5" y1="141" x2="306.5" y2="460" stroke="#000" stroke-opacity="0.13" stroke-width="1"/><line x1="342.5" y1="141" x2="342.5" y2="460" stroke="#000" stroke-opacity="0.13" stroke-width="1"/><line x1="59" y1="424.5" x2="372" y2="424.5" stroke="#000" stroke-opacity="0.13" stroke-width="1"/><line x1="59" y1="389.5" x2="372" y2="389.5" stroke="#000" stroke-opacity="0.13" stroke-width="1"/><line x1="59" y1="353.5" x2="372" y2="353.5" stroke="#000" stroke-opacity="0.13" stroke-width="1"/><line x1="59" y1="318.5" x2="372" y2="318.5" stroke="#000" stroke-opacity="0.13" stroke-width="1"/><line x1="59" y1="282.5" x2="372" y2="282.5" stroke="#000" stroke-opacity="0.13" stroke-width="1"/><line x1="59" y1="247.5" x2="372" y2="247.5" stroke="#000" stroke-opacity="0.13" stroke-width="1"/><line x1="59" y1="212.5" x2="372" y2="212.5" stroke="#000" stroke-opacity="0.13" stroke-width="1"/><line x1="59" y1="176.5" x2="372" y2="176.5" stroke="#000" stroke-opacity="0.13" stroke-width="1"/><line x1="59" y1="141.5" x2="372" y2="141.5" stroke="#000" stroke-opacity="0.13" stroke-width="1"/>
<line x1="59.5" y1="141" x2="59.5" y2="460.5" stroke="#8a8a8a" stroke-width="1"/>
<line x1="59" y1="460.5" x2="372" y2="460.5" stroke="#8a8a8a" stroke-width="1"/>
<g font-family="Liberation Sans" font-size="9.5" fill="#2a2a2a" stroke="#2a2a2a" stroke-width="0.2">
<text x="62" y="151">y</text>
<text x="62" y="179" textLength="13.8" lengthAdjust="spacingAndGlyphs">0.8</text><text x="62" y="250.2" textLength="13.8" lengthAdjust="spacingAndGlyphs">0.6</text><text x="62" y="321.1" textLength="13.8" lengthAdjust="spacingAndGlyphs">0.4</text><text x="62" y="392" textLength="13.8" lengthAdjust="spacingAndGlyphs">0.2</text>
<text x="62.2" y="457">0</text>
<text x="123" y="457" textLength="13.8" lengthAdjust="spacingAndGlyphs">0.2</text><text x="193.3" y="457" textLength="13.8" lengthAdjust="spacingAndGlyphs">0.4</text><text x="264.4" y="457" textLength="13.8" lengthAdjust="spacingAndGlyphs">0.6</text><text x="335.7" y="457" textLength="13.8" lengthAdjust="spacingAndGlyphs">0.8</text>
<text x="370" y="457" clip-path="url(#plotclip)">x</text>
</g>
<polyline points="115.8,429.5 167.9,247.9 181.5,256.6 279.2,341.7 115.8,429.5" fill="none" stroke="#eea238" stroke-width="1.2"/>
<polygon points="181.5,254.8 298.9,359.3 110.3,435.6" fill="none" stroke="#000" stroke-width="0.95"/>
<line x1="205" y1="276.2" x2="279.2" y2="342.4" stroke="#eea238" stroke-width="1.5" stroke-dasharray="4 4.5"/>
<text x="268" y="216.6" font-family="Liberation Sans" font-weight="bold" font-size="16" letter-spacing="0.35" fill="#000">Monitor</text>
<text x="268" y="236.6" font-family="Liberation Sans" font-weight="bold" font-size="16" letter-spacing="0.6" fill="#f0a030">sRGB</text>
</svg>

<!-- bars -->
<svg class="a" style="left:0;top:0" width="777" height="623" viewBox="0 0 777 623"><defs><linearGradient id="bg" x1="0" y1="0" x2="0" y2="1"><stop offset="0" stop-color="#e04a14"/><stop offset="0.1" stop-color="#e86418"/><stop offset="0.2" stop-color="#ee8a1c"/><stop offset="0.3" stop-color="#ecb41a"/><stop offset="0.4" stop-color="#e6dc16"/><stop offset="0.5" stop-color="#d8ec14"/><stop offset="0.6" stop-color="#b0d412"/><stop offset="0.7" stop-color="#88bc12"/><stop offset="0.8" stop-color="#64a812"/><stop offset="0.9" stop-color="#4c9a12"/><stop offset="1" stop-color="#3a8e12"/></linearGradient></defs><rect x="401.5" y="141.5" width="319" height="318" fill="url(#bg)" stroke="#1a0e06" stroke-width="1"/><line x1="402" y1="204.6" x2="720" y2="204.6" stroke="#000" stroke-opacity="0.12" stroke-width="1"/><line x1="402" y1="268.2" x2="720" y2="268.2" stroke="#000" stroke-opacity="0.12" stroke-width="1"/><line x1="402" y1="331.8" x2="720" y2="331.8" stroke="#000" stroke-opacity="0.12" stroke-width="1"/><line x1="402" y1="395.4" x2="720" y2="395.4" stroke="#000" stroke-opacity="0.12" stroke-width="1"/><g font-family="Liberation Sans" font-size="9" fill="#2a2008" stroke="#2a2008" stroke-width="0.1"><text x="403.5" y="150.3" textLength="42.3" lengthAdjust="spacingAndGlyphs">10 d E 94</text><text x="403.5" y="207.9" textLength="37" lengthAdjust="spacingAndGlyphs">8 d E 94</text><text x="403.5" y="271.5" textLength="37" lengthAdjust="spacingAndGlyphs">6 d E 94</text><text x="403.5" y="335.1" textLength="37" lengthAdjust="spacingAndGlyphs">4 d E 94</text><text x="403.5" y="398.7" textLength="37" lengthAdjust="spacingAndGlyphs">2 d E 94</text></g><rect x="458" y="436.35" width="11" height="22.65" fill="#3a3a3e" stroke="#000" stroke-width="1.5"/><rect x="473" y="452.75" width="11" height="6.25" fill="#555558" stroke="#000" stroke-width="1.5"/><rect x="488" y="407.45" width="11" height="51.55" fill="#8c8c8e" stroke="#000" stroke-width="1.5"/><rect x="503" y="413.75" width="11" height="45.25" fill="#c8c8c8" stroke="#000" stroke-width="1.5"/><rect x="533" y="311.05" width="11" height="147.95" fill="#ff0000" stroke="#000" stroke-width="1.5"/><rect x="548" y="368.65" width="11" height="90.35" fill="#00ff00" stroke="#000" stroke-width="1.5"/><rect x="563" y="275.55" width="11" height="183.45" fill="#0000ff" stroke="#000" stroke-width="1.5"/><rect x="578" y="401.55" width="11" height="57.45" fill="#00ffff" stroke="#000" stroke-width="1.5"/><rect x="593" y="426.55" width="11" height="32.45" fill="#ff00ff" stroke="#000" stroke-width="1.5"/><rect x="608" y="401.55" width="11" height="57.45" fill="#ffff00" stroke="#000" stroke-width="1.5"/><rect x="623" y="398.15" width="11" height="60.85" fill="#b05858" stroke="#000" stroke-width="1.5"/><rect x="638" y="395.45" width="11" height="63.55" fill="#50a860" stroke="#000" stroke-width="1.5"/><rect x="653" y="378.85" width="11" height="80.15" fill="#5858b0" stroke="#000" stroke-width="1.5"/><rect x="668" y="389.15" width="11" height="69.85" fill="#58a8b0" stroke="#000" stroke-width="1.5"/><rect x="683" y="417.95" width="11" height="41.05" fill="#b058b8" stroke="#000" stroke-width="1.5"/><rect x="698" y="413.95" width="11" height="45.05" fill="#a8a858" stroke="#000" stroke-width="1.5"/></svg>

<!-- stats -->
<div class="a" style="left:136px;top:473px;font-size:15px;line-height:17px">Target</div>
<div class="a" style="left:216px;top:473px;font-size:15px;line-height:17px">Current</div>
<div class="a" style="left:296px;top:473px;font-size:15px;line-height:17px">Deviation</div>
<div class="a" style="left:57px;top:493px;font-size:15px;line-height:17px">Gamma</div>
<div class="a" style="left:136px;top:493px;font-size:15px;line-height:17px">2.2</div>
<div class="a" style="left:216px;top:493px;font-size:15px;line-height:17px;color:#4ca64c">2.1</div>
<div class="a" style="left:296px;top:493px;font-size:15px;line-height:17px;color:#4ca64c">3%</div>
<div class="a" style="left:57px;top:511px;font-size:15px;line-height:17px">Kelvin</div>
<div class="a" style="left:136px;top:511px;font-size:15px;line-height:17px">6500</div>
<div class="a" style="left:216px;top:511px;font-size:15px;line-height:17px;color:#f08a3c">4507</div>
<div class="a" style="left:296px;top:511px;font-size:15px;line-height:17px;color:#f08a3c">31%</div>
<div class="a" style="left:57px;top:530px;font-size:15px;line-height:17px">cd/m2</div>
<div class="a" style="left:136px;top:530px;font-size:15px;line-height:17px">120</div>
<div class="a" style="left:216px;top:530px;font-size:15px;line-height:17px;color:#f08a3c">143</div>
<div class="a" style="left:296px;top:530px;font-size:15px;line-height:17px;color:#f08a3c">19%</div>

<div class="a" style="left:402px;top:474px;font-size:15px;line-height:17px">Delta E<span style="margin-left:-1.5px"> </span>Average</div>
<div class="a" style="left:402px;top:492px;font-size:15px;line-height:17px">Delta E Maximum</div>
<div class="a" style="left:542px;top:474px;font-size:15px;line-height:17px;color:#5aa83c">2.0</div>
<div class="a" style="left:542px;top:492px;font-size:15px;line-height:17px;color:#5aa83c">5.8</div>

<!-- buttons -->
<div class="btn" style="left:24px;top:582px;width:77px">Main Menu</div>
<div class="btn" style="left:116px;top:582px;width:76px">Calibration</div>
<div class="btn" style="left:589px;top:582px;width:75px">Save</div>
<div class="btn" style="left:679px;top:582px;width:75px">Quit</div>
</body></html>
